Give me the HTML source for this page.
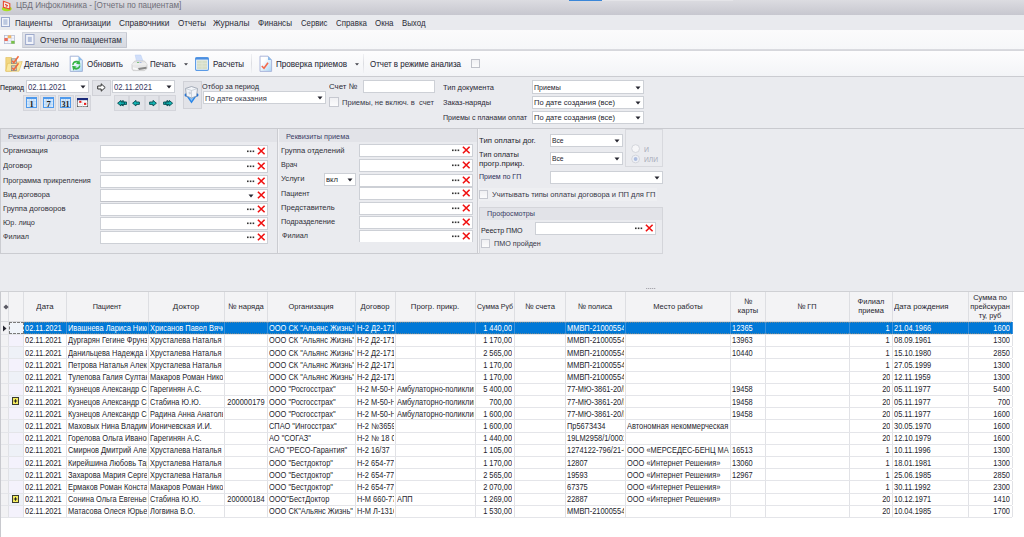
<!DOCTYPE html>
<html><head><meta charset="utf-8">
<style>
html,body{margin:0;padding:0;}
body{width:1024px;height:537px;overflow:hidden;position:relative;background:#eaebef;font-family:"Liberation Sans",sans-serif;}
div{position:absolute;}
.t{white-space:pre;line-height:12px;transform-origin:0 0;}
.cell{overflow:hidden;}
.ct{position:absolute;white-space:pre;line-height:12px;font-size:8.5px;transform:scaleX(0.875);transform-origin:0 0;}
svg{position:absolute;}
</style></head><body>
<div style="left:0px;top:0px;width:1024px;height:15px;background:linear-gradient(#dcdce1,#c7c7cf);"></div>
<div style="left:569px;top:0px;width:33px;height:1px;background:#3a86d8;"></div>
<div style="left:602px;top:0px;width:131px;height:1px;background:#e4e4e8;"></div>
<svg style="position:absolute;left:0px;top:0px" width="14" height="14" viewBox="0 0 14 14"><ellipse cx="6.8" cy="8.8" rx="4.9" ry="2.4" fill="#a8e020"/><path d="M3.4 1.2 L9.8 3.6 L9.8 9 L3.4 7.4 Z" fill="#f6ece4" stroke="#e84a30" stroke-width="1.1"/><path d="M5 4.2 L7.8 5.6 L6.2 7.2 M5.6 5.8 H7.4" fill="none" stroke="#e8402a" stroke-width="1"/></svg>
<div class="t" style="left:15.5px;top:0.16px;font-size:8.2px;color:#6e6e78;transform:scaleX(0.9948);">ЦБД Инфоклиника - [Отчеты по пациентам]</div>
<div style="left:0px;top:15px;width:1024px;height:15px;background:#e9eaee;"></div>
<svg style="position:absolute;left:1px;top:17px" width="9" height="10" viewBox="0 0 9 10"><rect x="0.5" y="0.5" width="8" height="9" fill="#f2f4fa" stroke="#9aa8cc" stroke-width="1"/><rect x="2.3" y="2.2" width="4.2" height="5.6" fill="#bcc8e0"/></svg>
<div class="t" style="left:15.2px;top:17.01px;font-size:9.2px;color:#2a2a36;transform:scaleX(0.8688);">Пациенты</div>
<div class="t" style="left:61.5px;top:17.01px;font-size:9.2px;color:#2a2a36;transform:scaleX(0.8788);">Организации</div>
<div class="t" style="left:118.7px;top:17.01px;font-size:9.2px;color:#2a2a36;transform:scaleX(0.9043);">Справочники</div>
<div class="t" style="left:177.5px;top:17.01px;font-size:9.2px;color:#2a2a36;transform:scaleX(0.8805);">Отчеты</div>
<div class="t" style="left:213px;top:17.01px;font-size:9.2px;color:#2a2a36;transform:scaleX(0.9083);">Журналы</div>
<div class="t" style="left:258px;top:17.01px;font-size:9.2px;color:#2a2a36;transform:scaleX(0.8803);">Финансы</div>
<div class="t" style="left:300.5px;top:17.01px;font-size:9.2px;color:#2a2a36;transform:scaleX(0.8412);">Сервис</div>
<div class="t" style="left:335.5px;top:17.01px;font-size:9.2px;color:#2a2a36;transform:scaleX(0.8589);">Справка</div>
<div class="t" style="left:375px;top:17.01px;font-size:9.2px;color:#2a2a36;transform:scaleX(0.8654);">Окна</div>
<div class="t" style="left:402px;top:17.01px;font-size:9.2px;color:#2a2a36;transform:scaleX(0.8537);">Выход</div>
<div style="left:0px;top:30px;width:1024px;height:19px;background:linear-gradient(#fbfbfc,#f6f7f9);"></div>
<div style="left:0px;top:49px;width:1024px;height:2px;background:linear-gradient(#dcdde2,#d4d5da);"></div>
<svg style="position:absolute;left:4px;top:35px" width="11" height="9" viewBox="0 0 11 9"><rect x="0.4" y="0.4" width="10.2" height="8.2" fill="#f8f8fc" stroke="#b4bcd4" stroke-width="0.8"/><path d="M3.8 0.4 V8.6 M7.2 0.4 V8.6 M0.4 3.2 H10.6 M0.4 5.9 H10.6" stroke="#c8d0e4" stroke-width="0.6"/><rect x="0.4" y="3" width="3.4" height="3" fill="#ea6a58"/><rect x="3.8" y="0.4" width="3.4" height="2.8" fill="#f2b460"/><rect x="7.2" y="5.9" width="3.4" height="2.8" fill="#78c048"/></svg>
<div style="left:22px;top:32px;width:105px;height:16px;background:linear-gradient(#e4e6ec,#d6d9e0);border:1px solid #d0d3db;border-right-color:#c4c7d0;border-bottom-color:#c4c7d0;box-sizing:border-box;border-radius:1px;"></div>
<svg style="position:absolute;left:25px;top:34px" width="10" height="11" viewBox="0 0 10 11"><rect x="0.6" y="0.5" width="8.4" height="10" fill="#f2f4fa" stroke="#9eaacc" stroke-width="1"/><rect x="2.8" y="2.8" width="4" height="5.2" fill="#b4c0dc"/></svg>
<div class="t" style="left:40px;top:33.81px;font-size:9.2px;color:#2a2a36;transform:scaleX(0.8781);">Отчеты по пациентам</div>
<div style="left:0px;top:51px;width:1024px;height:25px;background:linear-gradient(#fdfdfe,#f3f4f7);"></div>
<div style="left:0px;top:76px;width:1024px;height:1px;background:#cbccd1;"></div>
<svg style="position:absolute;left:5px;top:55px" width="18" height="17" viewBox="0 0 18 17"><path d="M0.8 2.5 L6.5 2.5 L6.5 16.2 L0.8 16.2 Z" fill="#f2d680" stroke="#e0bc58" stroke-width="0.6"/><path d="M2.5 8.5 L17.2 6.5 L14 16.2 L0.8 16.2 Z" fill="#fae8a0" stroke="#e0bc58" stroke-width="0.6"/><rect x="6.5" y="3.8" width="4.8" height="4.8" fill="#d0d0c8" stroke="#8c8c84" stroke-width="0.8"/><rect x="6.5" y="10.8" width="4.8" height="4.8" fill="#d0d0c8" stroke="#8c8c84" stroke-width="0.8"/><path d="M7.2 5.8 L8.8 7.8 L13.5 1.2" fill="none" stroke="#f26a3c" stroke-width="1.5"/><path d="M7.2 12.8 L8.8 14.8 L13.5 8.2" fill="none" stroke="#f26a3c" stroke-width="1.5"/></svg>
<div class="t" style="left:24px;top:57.71px;font-size:9.5px;color:#2c2c3a;transform:scaleX(0.8343);-webkit-text-stroke:0.08px #2c2c3a;">Детально</div>
<svg style="position:absolute;left:69px;top:55px" width="15" height="18" viewBox="0 0 15 18"><defs><linearGradient id="gd1" x1="0" y1="0" x2="1" y2="1"><stop offset="0.3" stop-color="#ffffff"/><stop offset="1" stop-color="#a8d4f4"/></linearGradient></defs><path d="M1.2 1.2 L9.5 1.2 L13.4 5.2 L13.4 16.4 L1.2 16.4 Z" fill="url(#gd1)" stroke="#a4b4d8" stroke-width="1"/><path d="M9.5 1.2 L9.5 5.2 L13.4 5.2 Z" fill="#8cbcec"/><path d="M3.2 10 C3 6.5 6.5 5 9.5 6.2 L10.2 4.6 L11.4 9.6 L6.8 8.8 L8.3 7.7 C6.6 7.2 4.8 8 4.6 10 Z" fill="#34b444"/><path d="M11.4 10.6 C11.6 14 8 15.4 5 14.3 L4.3 15.8 L3.1 10.8 L7.7 11.6 L6.2 12.7 C7.9 13.2 9.8 12.4 10 10.6 Z" fill="#34b444"/></svg>
<div class="t" style="left:86.5px;top:57.71px;font-size:9.5px;color:#2c2c3a;transform:scaleX(0.8369);-webkit-text-stroke:0.08px #2c2c3a;">Обновить</div>
<svg style="position:absolute;left:131px;top:54px" width="17" height="18" viewBox="0 0 17 18"><path d="M4.2 1 L9.8 1 L12.2 7.5 L5.6 7.5 Z" fill="#d0defa" stroke="#b8ccf0" stroke-width="0.5"/><path d="M1 10 L3.8 7 L13.4 7 L16 10 L16 14.5 L13.4 16.6 L2 16.6 L1 15 Z" fill="#e8e8e8" stroke="#c4c4c4" stroke-width="0.7"/><path d="M1 10 L16 10" stroke="#f8f8f8" stroke-width="0.8"/><rect x="6" y="8" width="2" height="1" fill="#7cc47c"/><rect x="8.5" y="8" width="2" height="1" fill="#a8b8e0"/><path d="M7 14 L15.5 12.8 L15.5 14.8 L8 16 Z" fill="#888"/><path d="M2 13.2 L6.5 14.5 L6.5 16 L2 15 Z" fill="#fafafa"/></svg>
<div class="t" style="left:150px;top:57.71px;font-size:9.5px;color:#2c2c3a;transform:scaleX(0.8354);-webkit-text-stroke:0.08px #2c2c3a;">Печать</div>
<svg style="position:absolute;left:183.5px;top:63px" width="4" height="3" viewBox="0 0 4 3"><path d="M0 0.2 L4 0.2 L2 2.6 Z" fill="#404048"/></svg>
<svg style="position:absolute;left:195px;top:57px" width="14" height="14" viewBox="0 0 14 14"><rect x="0.6" y="0.6" width="12.8" height="12.8" rx="1.2" fill="#f4f8fc" stroke="#5a9ae6" stroke-width="1.1"/><rect x="0.6" y="0.6" width="12.8" height="2" fill="#4a8ee0"/><rect x="2" y="3.4" width="10" height="8.8" fill="#d6dec8"/><path d="M2 6.4 H12 M2 9.2 H12 M7 3.4 V12.2" stroke="#e4eadc" stroke-width="0.6"/></svg>
<div class="t" style="left:212.5px;top:57.71px;font-size:9.5px;color:#2c2c3a;transform:scaleX(0.8368);-webkit-text-stroke:0.08px #2c2c3a;">Расчеты</div>
<div style="left:251px;top:54px;width:1px;height:19px;background:linear-gradient(#f0f1f4,#dcdde2 50%,#f0f1f4);"></div>
<svg style="position:absolute;left:259px;top:55px" width="14" height="18" viewBox="0 0 14 18"><defs><linearGradient id="gd2" x1="0" y1="0" x2="1" y2="1"><stop offset="0.3" stop-color="#ffffff"/><stop offset="1" stop-color="#a8d4f4"/></linearGradient></defs><path d="M1 1.2 L9 1.2 L12.6 5 L12.6 16.4 L1 16.4 Z" fill="url(#gd2)" stroke="#acb6da" stroke-width="1"/><path d="M9 1.2 L9 5 L12.6 5 Z" fill="#88b8e8"/><path d="M2.8 11 L5 13.2 L9 7.8" fill="none" stroke="#f46a4c" stroke-width="1.6"/></svg>
<div class="t" style="left:276px;top:57.71px;font-size:9.5px;color:#2c2c3a;transform:scaleX(0.8547);-webkit-text-stroke:0.08px #2c2c3a;">Проверка приемов</div>
<svg style="position:absolute;left:354.5px;top:63px" width="4" height="3" viewBox="0 0 4 3"><path d="M0 0.2 L4 0.2 L2 2.6 Z" fill="#404048"/></svg>
<div style="left:363px;top:54px;width:1px;height:19px;background:linear-gradient(#f0f1f4,#dcdde2 50%,#f0f1f4);"></div>
<div class="t" style="left:370px;top:57.71px;font-size:9.5px;color:#2c2c3a;transform:scaleX(0.8332);-webkit-text-stroke:0.08px #2c2c3a;">Отчет в режиме анализа</div>
<div style="left:471px;top:59px;width:9px;height:9px;background:linear-gradient(#f0f0f3,#fbfbfc);border:1px solid #c0c2ca;box-sizing:border-box;"></div>
<div style="left:0px;top:77px;width:1024px;height:460px;background:#eaebef;"></div>
<div class="t" style="left:0px;top:81.73px;font-size:8px;color:#202028;transform:scaleX(0.8553);-webkit-text-stroke:0.1px #202028;">Период</div>
<div style="left:26px;top:80px;width:63px;height:13px;background:#fff;border:1px solid #cdd0d6;box-sizing:border-box;"></div>
<div class="t" style="left:27.5px;top:81.02px;font-size:8.6px;color:#34345e;transform:scaleX(0.8961);">02.11.2021</div>
<svg style="position:absolute;left:80px;top:85.0px" width="6" height="4" viewBox="0 0 6 4"><path d="M0.5 0.5 L5.5 0.5 L3 3.5 Z" fill="#25252f"/></svg>
<div style="left:92px;top:80px;width:19px;height:16px;background:#e2e3e8;border:1px solid #d0d1d7;box-sizing:border-box;"></div>
<svg style="position:absolute;left:97px;top:82.5px" width="9" height="9" viewBox="0 0 9 9"><path d="M0.7 3 L4.2 3 L4.2 0.8 L8.2 4.5 L4.2 8.2 L4.2 6 L0.7 6 Z" fill="#fcfcfc" stroke="#303030" stroke-width="1" stroke-linejoin="miter"/></svg>
<div style="left:112px;top:80px;width:63px;height:13px;background:#fff;border:1px solid #cdd0d6;box-sizing:border-box;"></div>
<div class="t" style="left:113.5px;top:81.02px;font-size:8.6px;color:#34345e;transform:scaleX(0.8961);">02.11.2021</div>
<svg style="position:absolute;left:166px;top:85.0px" width="6" height="4" viewBox="0 0 6 4"><path d="M0.5 0.5 L5.5 0.5 L3 3.5 Z" fill="#25252f"/></svg>
<div style="left:23px;top:95px;width:16px;height:16px;background:#e2e3e8;border:1px solid #d4d5db;box-sizing:border-box;"></div>
<div style="left:40px;top:95px;width:16px;height:16px;background:#e2e3e8;border:1px solid #d4d5db;box-sizing:border-box;"></div>
<div style="left:58px;top:95px;width:16px;height:16px;background:#e2e3e8;border:1px solid #d4d5db;box-sizing:border-box;"></div>
<div style="left:75px;top:95px;width:16px;height:16px;background:#e2e3e8;border:1px solid #d4d5db;box-sizing:border-box;"></div>
<svg style="position:absolute;left:26px;top:97px" width="11" height="11" viewBox="0 0 11 11"><rect x="0" y="0" width="11" height="11" fill="#4f9aec"/><rect x="1" y="2" width="9" height="8" fill="#d8eafc"/><path d="M1 4.6 H10 M1 7.2 H10 M3.2 2 V10 M5.5 2 V10 M7.8 2 V10" stroke="#a8ccf4" stroke-width="0.6"/><text x="5.5" y="9.6" font-family="Liberation Serif" font-weight="bold" font-size="8.5" text-anchor="middle" fill="#1a1a1a" >1</text></svg>
<svg style="position:absolute;left:43px;top:97px" width="11" height="11" viewBox="0 0 11 11"><rect x="0" y="0" width="11" height="11" fill="#4f9aec"/><rect x="1" y="2" width="9" height="8" fill="#d8eafc"/><path d="M1 4.6 H10 M1 7.2 H10 M3.2 2 V10 M5.5 2 V10 M7.8 2 V10" stroke="#a8ccf4" stroke-width="0.6"/><text x="5.5" y="9.6" font-family="Liberation Serif" font-weight="bold" font-size="8.5" text-anchor="middle" fill="#1a1a1a" >7</text></svg>
<svg style="position:absolute;left:60px;top:97px" width="11" height="11" viewBox="0 0 11 11"><rect x="0" y="0" width="11" height="11" fill="#4f9aec"/><rect x="1" y="2" width="9" height="8" fill="#d8eafc"/><path d="M1 4.6 H10 M1 7.2 H10 M3.2 2 V10 M5.5 2 V10 M7.8 2 V10" stroke="#a8ccf4" stroke-width="0.6"/><text x="5.5" y="9.6" font-family="Liberation Serif" font-weight="bold" font-size="8" text-anchor="middle" fill="#1a1a1a" textLength="8" lengthAdjust="spacingAndGlyphs">31</text></svg>
<svg style="position:absolute;left:77px;top:98px" width="11" height="9" viewBox="0 0 11 9"><rect x="0.3" y="0.3" width="10.4" height="8.4" fill="#fff" stroke="#404040" stroke-width="0.6"/><rect x="0" y="0" width="11" height="2.2" fill="#1a2a7a"/><path d="M0.5 4.6 H10.5 M0.5 6.6 H10.5 M3 2 V9 M5.5 2 V9 M8 2 V9" stroke="#e0e0e0" stroke-width="0.5"/><rect x="2.2" y="2.8" width="2.2" height="2" fill="#e81c1c"/><rect x="7" y="4.9" width="2.2" height="2" fill="#e81c1c"/></svg>
<div style="left:114px;top:95px;width:15px;height:16px;background:#e2e3e8;border:1px solid #d4d5db;box-sizing:border-box;"></div>
<div style="left:129px;top:95px;width:16px;height:16px;background:#e2e3e8;border:1px solid #d4d5db;box-sizing:border-box;"></div>
<div style="left:145px;top:95px;width:14px;height:16px;background:#e2e3e8;border:1px solid #d4d5db;box-sizing:border-box;"></div>
<div style="left:159px;top:95px;width:17px;height:16px;background:#e2e3e8;border:1px solid #d4d5db;box-sizing:border-box;"></div>
<svg style="position:absolute;left:117px;top:99.5px" width="10" height="7" viewBox="0 0 10 7"><g transform="translate(2.2,0)"><path d="M0.6 3.2 L4 0.4 L4 2 L7.4 2 L7.4 4.4 L4 4.4 L4 6 Z" fill="#10b4b4" stroke="#084c50" stroke-width="0.9" stroke-linejoin="round"/></g><path d="M0.6 3.2 L4 0.4 L4 2 L7.4 2 L7.4 4.4 L4 4.4 L4 6 Z" fill="#10b4b4" stroke="#084c50" stroke-width="0.9" stroke-linejoin="round"/></svg>
<svg style="position:absolute;left:132px;top:99.5px" width="8" height="7" viewBox="0 0 8 7"><path d="M0.6 3.2 L4 0.4 L4 2 L7.4 2 L7.4 4.4 L4 4.4 L4 6 Z" fill="#10b4b4" stroke="#084c50" stroke-width="0.9" stroke-linejoin="round"/></svg>
<svg style="position:absolute;left:149px;top:99.5px" width="8" height="7" viewBox="0 0 8 7"><path d="M7.4 3.2 L4 0.4 L4 2 L0.6 2 L0.6 4.4 L4 4.4 L4 6 Z" fill="#10b4b4" stroke="#084c50" stroke-width="0.9" stroke-linejoin="round"/></svg>
<svg style="position:absolute;left:162.5px;top:99.5px" width="10" height="7" viewBox="0 0 10 7"><path d="M7.4 3.2 L4 0.4 L4 2 L0.6 2 L0.6 4.4 L4 4.4 L4 6 Z" fill="#10b4b4" stroke="#084c50" stroke-width="0.9" stroke-linejoin="round"/><g transform="translate(2.2,0)"><path d="M7.4 3.2 L4 0.4 L4 2 L0.6 2 L0.6 4.4 L4 4.4 L4 6 Z" fill="#10b4b4" stroke="#084c50" stroke-width="0.9" stroke-linejoin="round"/></g></svg>
<div style="left:183px;top:81px;width:19px;height:28px;background:#e2e3e8;border:1px solid #d0d1d7;box-sizing:border-box;"></div>
<svg style="position:absolute;left:183px;top:85px" width="17" height="20" viewBox="0 0 17 20"><path d="M2 9 L15 9 L8.5 18.5 Z" fill="#2a86e8"/><path d="M4.5 10 L12.5 10 L8.5 16 Z" fill="#8cc4f8"/><circle cx="3.3" cy="10" r="1.8" fill="#1c70d8"/><circle cx="13.7" cy="10" r="1.8" fill="#1c70d8"/><path d="M2.5 3.5 L8.5 1.5 L14.5 3.5 L13.5 11 L8.5 13 L3.5 11 Z" fill="#f2f4f8" stroke="#8a94a4" stroke-width="0.7"/><path d="M2.5 3.5 L8.5 5.5 L14.5 3.5 M8.5 5.5 L8.5 13" stroke="#b4bcc8" stroke-width="0.6" fill="none"/><path d="M5.5 7 L7.5 6.5 L8 9 L6 9.5 Z" fill="#c8ced8"/></svg>
<div class="t" style="left:202px;top:80.53px;font-size:8px;color:#2a2a36;transform:scaleX(0.9110);">Отбор за период</div>
<div style="left:203px;top:91px;width:123px;height:13px;background:#fff;border:1px solid #cdd0d6;box-sizing:border-box;"></div>
<div class="t" style="left:204.5px;top:92.53px;font-size:8px;color:#383848;transform:scaleX(0.9445);">По дате оказания</div>
<svg style="position:absolute;left:317px;top:96.0px" width="6" height="4" viewBox="0 0 6 4"><path d="M0.5 0.5 L5.5 0.5 L3 3.5 Z" fill="#25252f"/></svg>
<div class="t" style="left:329px;top:80.53px;font-size:8px;color:#2a2a36;transform:scaleX(0.9822);">Счет №</div>
<div style="left:363px;top:80px;width:72px;height:13px;background:#fff;border:1px solid #cdd0d6;box-sizing:border-box;"></div>
<div style="left:329px;top:97px;width:10px;height:10px;background:linear-gradient(#f0f0f3,#fbfbfc);border:1px solid #c6c8d0;box-sizing:border-box;"></div>
<div class="t" style="left:342px;top:96.73px;font-size:8px;color:#383848;transform:scaleX(0.9439);">Приемы, не включ. в  счет</div>
<div class="t" style="left:443px;top:82.03px;font-size:8px;color:#2a2a36;transform:scaleX(0.9346);">Тип документа</div>
<div class="t" style="left:443px;top:97.03px;font-size:8px;color:#2a2a36;transform:scaleX(0.9298);">Заказ-наряды</div>
<div class="t" style="left:443px;top:112.03px;font-size:8px;color:#2a2a36;transform:scaleX(0.8869);">Приемы с планами оплат</div>
<div style="left:532px;top:80px;width:112px;height:14px;background:#fff;border:1px solid #cdd0d6;box-sizing:border-box;"></div>
<div class="t" style="left:533.5px;top:81.73px;font-size:8px;color:#25252d;transform:scaleX(0.8792);">Приемы</div>
<svg style="position:absolute;left:635px;top:85.5px" width="6" height="4" viewBox="0 0 6 4"><path d="M0.5 0.5 L5.5 0.5 L3 3.5 Z" fill="#25252f"/></svg>
<div style="left:532px;top:96px;width:112px;height:13px;background:#fff;border:1px solid #cdd0d6;box-sizing:border-box;"></div>
<div class="t" style="left:533.5px;top:96.73px;font-size:8px;color:#25252d;transform:scaleX(0.9413);">По дате создания (все)</div>
<svg style="position:absolute;left:635px;top:101.0px" width="6" height="4" viewBox="0 0 6 4"><path d="M0.5 0.5 L5.5 0.5 L3 3.5 Z" fill="#25252f"/></svg>
<div style="left:532px;top:111px;width:112px;height:13px;background:#fff;border:1px solid #cdd0d6;box-sizing:border-box;"></div>
<div class="t" style="left:533.5px;top:111.73px;font-size:8px;color:#25252d;transform:scaleX(0.9413);">По дате создания (все)</div>
<svg style="position:absolute;left:635px;top:116.0px" width="6" height="4" viewBox="0 0 6 4"><path d="M0.5 0.5 L5.5 0.5 L3 3.5 Z" fill="#25252f"/></svg>
<div style="left:0px;top:128px;width:1024px;height:1px;background:#c9cacf;"></div>
<div style="left:0px;top:129px;width:1px;height:125px;background:#cbccd1;"></div>
<div style="left:1px;top:129px;width:276px;height:13px;background:#e2e3e8;"></div>
<div style="left:277px;top:129px;width:1px;height:125px;background:#cbccd1;"></div>
<div style="left:278px;top:129px;width:1px;height:125px;background:#f2f2f5;"></div>
<div style="left:279px;top:129px;width:198px;height:13px;background:#e2e3e8;"></div>
<div style="left:477px;top:129px;width:1px;height:125px;background:#cbccd1;"></div>
<div style="left:478px;top:129px;width:1px;height:125px;background:#f2f2f5;"></div>
<div style="left:0px;top:253px;width:479px;height:1px;background:#cbccd1;"></div>
<div class="t" style="left:8px;top:131.23px;font-size:8px;color:#3a3e66;transform:scaleX(0.9436);">Реквизиты договора</div>
<div class="t" style="left:286px;top:131.23px;font-size:8px;color:#3a3e66;transform:scaleX(0.9164);">Реквизиты приема</div>
<div class="t" style="left:3px;top:144.93px;font-size:8px;color:#303038;transform:scaleX(0.9264);">Организация</div>
<div style="left:100px;top:145px;width:168px;height:13px;background:#fff;border:1px solid #cdd0d6;box-sizing:border-box;"></div>
<svg style="position:absolute;left:247px;top:150px" width="8" height="3" viewBox="0 0 8 3"><rect x="0" y="0.5" width="1.6" height="1.6" fill="#333"/><rect x="2.8" y="0.5" width="1.6" height="1.6" fill="#333"/><rect x="5.6" y="0.5" width="1.6" height="1.6" fill="#333"/></svg>
<svg style="position:absolute;left:257px;top:147px" width="9" height="8" viewBox="0 0 9 8"><path d="M0.9 0.7 L7.6 7.3 M7.6 0.7 L0.9 7.3" stroke="#f01010" stroke-width="1.6"/></svg>
<div class="t" style="left:3px;top:159.93px;font-size:8px;color:#303038;transform:scaleX(0.9567);">Договор</div>
<div style="left:100px;top:160px;width:168px;height:13px;background:#fff;border:1px solid #cdd0d6;box-sizing:border-box;"></div>
<svg style="position:absolute;left:247px;top:165px" width="8" height="3" viewBox="0 0 8 3"><rect x="0" y="0.5" width="1.6" height="1.6" fill="#333"/><rect x="2.8" y="0.5" width="1.6" height="1.6" fill="#333"/><rect x="5.6" y="0.5" width="1.6" height="1.6" fill="#333"/></svg>
<svg style="position:absolute;left:257px;top:162px" width="9" height="8" viewBox="0 0 9 8"><path d="M0.9 0.7 L7.6 7.3 M7.6 0.7 L0.9 7.3" stroke="#f01010" stroke-width="1.6"/></svg>
<div class="t" style="left:3px;top:174.93px;font-size:8px;color:#303038;transform:scaleX(0.9103);">Программа прикрепления</div>
<div style="left:100px;top:175px;width:168px;height:13px;background:#fff;border:1px solid #cdd0d6;box-sizing:border-box;"></div>
<svg style="position:absolute;left:247px;top:180px" width="8" height="3" viewBox="0 0 8 3"><rect x="0" y="0.5" width="1.6" height="1.6" fill="#333"/><rect x="2.8" y="0.5" width="1.6" height="1.6" fill="#333"/><rect x="5.6" y="0.5" width="1.6" height="1.6" fill="#333"/></svg>
<svg style="position:absolute;left:257px;top:177px" width="9" height="8" viewBox="0 0 9 8"><path d="M0.9 0.7 L7.6 7.3 M7.6 0.7 L0.9 7.3" stroke="#f01010" stroke-width="1.6"/></svg>
<div class="t" style="left:3px;top:188.93px;font-size:8px;color:#303038;transform:scaleX(0.9305);">Вид договора</div>
<div style="left:100px;top:189px;width:168px;height:13px;background:#fff;border:1px solid #cdd0d6;border-bottom-color:#c0c2c8;box-sizing:border-box;"></div>
<svg style="position:absolute;left:248px;top:194px" width="6" height="4" viewBox="0 0 6 4"><path d="M0.5 0.5 L5.5 0.5 L3 3.5 Z" fill="#25252f"/></svg>
<svg style="position:absolute;left:257px;top:191px" width="9" height="8" viewBox="0 0 9 8"><path d="M0.9 0.7 L7.6 7.3 M7.6 0.7 L0.9 7.3" stroke="#f01010" stroke-width="1.6"/></svg>
<div class="t" style="left:3px;top:202.93px;font-size:8px;color:#303038;transform:scaleX(0.9536);">Группа договоров</div>
<div style="left:100px;top:203px;width:168px;height:13px;background:#fff;border:1px solid #cdd0d6;box-sizing:border-box;"></div>
<svg style="position:absolute;left:247px;top:208px" width="8" height="3" viewBox="0 0 8 3"><rect x="0" y="0.5" width="1.6" height="1.6" fill="#333"/><rect x="2.8" y="0.5" width="1.6" height="1.6" fill="#333"/><rect x="5.6" y="0.5" width="1.6" height="1.6" fill="#333"/></svg>
<svg style="position:absolute;left:257px;top:205px" width="9" height="8" viewBox="0 0 9 8"><path d="M0.9 0.7 L7.6 7.3 M7.6 0.7 L0.9 7.3" stroke="#f01010" stroke-width="1.6"/></svg>
<div class="t" style="left:3px;top:216.93px;font-size:8px;color:#303038;transform:scaleX(0.9100);">Юр. лицо</div>
<div style="left:100px;top:217px;width:168px;height:13px;background:#fff;border:1px solid #cdd0d6;box-sizing:border-box;"></div>
<svg style="position:absolute;left:247px;top:222px" width="8" height="3" viewBox="0 0 8 3"><rect x="0" y="0.5" width="1.6" height="1.6" fill="#333"/><rect x="2.8" y="0.5" width="1.6" height="1.6" fill="#333"/><rect x="5.6" y="0.5" width="1.6" height="1.6" fill="#333"/></svg>
<svg style="position:absolute;left:257px;top:219px" width="9" height="8" viewBox="0 0 9 8"><path d="M0.9 0.7 L7.6 7.3 M7.6 0.7 L0.9 7.3" stroke="#f01010" stroke-width="1.6"/></svg>
<div class="t" style="left:3px;top:230.93px;font-size:8px;color:#303038;transform:scaleX(0.9026);">Филиал</div>
<div style="left:100px;top:231px;width:168px;height:13px;background:#fff;border:1px solid #cdd0d6;box-sizing:border-box;"></div>
<svg style="position:absolute;left:247px;top:236px" width="8" height="3" viewBox="0 0 8 3"><rect x="0" y="0.5" width="1.6" height="1.6" fill="#333"/><rect x="2.8" y="0.5" width="1.6" height="1.6" fill="#333"/><rect x="5.6" y="0.5" width="1.6" height="1.6" fill="#333"/></svg>
<svg style="position:absolute;left:257px;top:233px" width="9" height="8" viewBox="0 0 9 8"><path d="M0.9 0.7 L7.6 7.3 M7.6 0.7 L0.9 7.3" stroke="#f01010" stroke-width="1.6"/></svg>
<div class="t" style="left:281px;top:144.83px;font-size:8px;color:#303038;transform:scaleX(0.9538);">Группа отделений</div>
<div style="left:359px;top:144px;width:114px;height:13px;background:#fff;border:1px solid #cdd0d6;box-sizing:border-box;"></div>
<svg style="position:absolute;left:452px;top:149px" width="8" height="3" viewBox="0 0 8 3"><rect x="0" y="0.5" width="1.6" height="1.6" fill="#333"/><rect x="2.8" y="0.5" width="1.6" height="1.6" fill="#333"/><rect x="5.6" y="0.5" width="1.6" height="1.6" fill="#333"/></svg>
<svg style="position:absolute;left:462px;top:146px" width="9" height="8" viewBox="0 0 9 8"><path d="M0.9 0.7 L7.6 7.3 M7.6 0.7 L0.9 7.3" stroke="#f01010" stroke-width="1.6"/></svg>
<div class="t" style="left:281px;top:159.13px;font-size:8px;color:#303038;transform:scaleX(0.8943);">Врач</div>
<div style="left:359px;top:159px;width:114px;height:13px;background:#fff;border:1px solid #cdd0d6;box-sizing:border-box;"></div>
<svg style="position:absolute;left:452px;top:164px" width="8" height="3" viewBox="0 0 8 3"><rect x="0" y="0.5" width="1.6" height="1.6" fill="#333"/><rect x="2.8" y="0.5" width="1.6" height="1.6" fill="#333"/><rect x="5.6" y="0.5" width="1.6" height="1.6" fill="#333"/></svg>
<svg style="position:absolute;left:462px;top:161px" width="9" height="8" viewBox="0 0 9 8"><path d="M0.9 0.7 L7.6 7.3 M7.6 0.7 L0.9 7.3" stroke="#f01010" stroke-width="1.6"/></svg>
<div class="t" style="left:281px;top:173.43px;font-size:8px;color:#303038;transform:scaleX(0.9511);">Услуги</div>
<div style="left:359px;top:174px;width:114px;height:13px;background:#fff;border:1px solid #cdd0d6;box-sizing:border-box;"></div>
<svg style="position:absolute;left:452px;top:179px" width="8" height="3" viewBox="0 0 8 3"><rect x="0" y="0.5" width="1.6" height="1.6" fill="#333"/><rect x="2.8" y="0.5" width="1.6" height="1.6" fill="#333"/><rect x="5.6" y="0.5" width="1.6" height="1.6" fill="#333"/></svg>
<svg style="position:absolute;left:462px;top:176px" width="9" height="8" viewBox="0 0 9 8"><path d="M0.9 0.7 L7.6 7.3 M7.6 0.7 L0.9 7.3" stroke="#f01010" stroke-width="1.6"/></svg>
<div class="t" style="left:281px;top:187.63px;font-size:8px;color:#303038;transform:scaleX(0.8967);">Пациент</div>
<div style="left:359px;top:187px;width:114px;height:13px;background:#fff;border:1px solid #cdd0d6;box-sizing:border-box;"></div>
<svg style="position:absolute;left:452px;top:192px" width="8" height="3" viewBox="0 0 8 3"><rect x="0" y="0.5" width="1.6" height="1.6" fill="#333"/><rect x="2.8" y="0.5" width="1.6" height="1.6" fill="#333"/><rect x="5.6" y="0.5" width="1.6" height="1.6" fill="#333"/></svg>
<svg style="position:absolute;left:462px;top:189px" width="9" height="8" viewBox="0 0 9 8"><path d="M0.9 0.7 L7.6 7.3 M7.6 0.7 L0.9 7.3" stroke="#f01010" stroke-width="1.6"/></svg>
<div class="t" style="left:281px;top:201.63px;font-size:8px;color:#303038;transform:scaleX(0.9508);">Представитель</div>
<div style="left:359px;top:202px;width:114px;height:13px;background:#fff;border:1px solid #cdd0d6;box-sizing:border-box;"></div>
<svg style="position:absolute;left:452px;top:207px" width="8" height="3" viewBox="0 0 8 3"><rect x="0" y="0.5" width="1.6" height="1.6" fill="#333"/><rect x="2.8" y="0.5" width="1.6" height="1.6" fill="#333"/><rect x="5.6" y="0.5" width="1.6" height="1.6" fill="#333"/></svg>
<svg style="position:absolute;left:462px;top:204px" width="9" height="8" viewBox="0 0 9 8"><path d="M0.9 0.7 L7.6 7.3 M7.6 0.7 L0.9 7.3" stroke="#f01010" stroke-width="1.6"/></svg>
<div class="t" style="left:281px;top:215.83px;font-size:8px;color:#303038;transform:scaleX(0.9263);">Подразделение</div>
<div style="left:359px;top:216px;width:114px;height:13px;background:#fff;border:1px solid #cdd0d6;box-sizing:border-box;"></div>
<svg style="position:absolute;left:452px;top:221px" width="8" height="3" viewBox="0 0 8 3"><rect x="0" y="0.5" width="1.6" height="1.6" fill="#333"/><rect x="2.8" y="0.5" width="1.6" height="1.6" fill="#333"/><rect x="5.6" y="0.5" width="1.6" height="1.6" fill="#333"/></svg>
<svg style="position:absolute;left:462px;top:218px" width="9" height="8" viewBox="0 0 9 8"><path d="M0.9 0.7 L7.6 7.3 M7.6 0.7 L0.9 7.3" stroke="#f01010" stroke-width="1.6"/></svg>
<div class="t" style="left:282.2px;top:230.43px;font-size:8px;color:#303038;transform:scaleX(0.9026);">Филиал</div>
<div style="left:359px;top:230px;width:114px;height:12px;background:#fff;border:1px solid #cdd0d6;box-sizing:border-box;border-bottom:none;"></div>
<svg style="position:absolute;left:452px;top:235px" width="8" height="3" viewBox="0 0 8 3"><rect x="0" y="0.5" width="1.6" height="1.6" fill="#333"/><rect x="2.8" y="0.5" width="1.6" height="1.6" fill="#333"/><rect x="5.6" y="0.5" width="1.6" height="1.6" fill="#333"/></svg>
<svg style="position:absolute;left:462px;top:232px" width="9" height="8" viewBox="0 0 9 8"><path d="M0.9 0.7 L7.6 7.3 M7.6 0.7 L0.9 7.3" stroke="#f01010" stroke-width="1.6"/></svg>
<div style="left:324px;top:173px;width:32px;height:13px;background:#fff;border:1px solid #cdd0d6;box-sizing:border-box;"></div>
<div class="t" style="left:325.5px;top:173.93px;font-size:8px;color:#25252d;transform:scaleX(0.9594);">вкл</div>
<svg style="position:absolute;left:347px;top:178.0px" width="6" height="4" viewBox="0 0 6 4"><path d="M0.5 0.5 L5.5 0.5 L3 3.5 Z" fill="#25252f"/></svg>
<div class="t" style="left:479px;top:134.73px;font-size:8px;color:#25252d;transform:scaleX(0.9725);">Тип оплаты дог.</div>
<div class="t" style="left:479px;top:149.03px;font-size:8px;color:#25252d;transform:scaleX(0.9310);">Тип оплаты</div>
<div class="t" style="left:479px;top:157.83px;font-size:8px;color:#25252d;transform:scaleX(0.9818);">прогр.прикр.</div>
<div class="t" style="left:479px;top:171.23px;font-size:8px;color:#2c3058;transform:scaleX(0.8816);">Прием по ГП</div>
<div style="left:550px;top:134px;width:73px;height:13px;background:#fff;border:1px solid #cdd0d6;box-sizing:border-box;"></div>
<div class="t" style="left:551.5px;top:135.23px;font-size:8px;color:#25252d;transform:scaleX(0.8415);">Все</div>
<svg style="position:absolute;left:614px;top:139.0px" width="6" height="4" viewBox="0 0 6 4"><path d="M0.5 0.5 L5.5 0.5 L3 3.5 Z" fill="#25252f"/></svg>
<div style="left:550px;top:152px;width:73px;height:13px;background:#fff;border:1px solid #cdd0d6;box-sizing:border-box;"></div>
<div class="t" style="left:551.5px;top:153.23px;font-size:8px;color:#25252d;transform:scaleX(0.8415);">Все</div>
<svg style="position:absolute;left:614px;top:157.0px" width="6" height="4" viewBox="0 0 6 4"><path d="M0.5 0.5 L5.5 0.5 L3 3.5 Z" fill="#25252f"/></svg>
<div style="left:625px;top:129px;width:38px;height:38px;border:1px solid #d8d9de;box-sizing:border-box;"></div>
<svg style="position:absolute;left:631px;top:144px" width="10" height="20" viewBox="0 0 10 20"><circle cx="4.6" cy="4.6" r="3.9" fill="#f6f6f8" stroke="#d4d6dc" stroke-width="1"/><circle cx="4.6" cy="15" r="3.9" fill="#eef0f6" stroke="#d4d6dc" stroke-width="1"/><circle cx="4.6" cy="15" r="1.9" fill="#aebee0"/></svg>
<div class="t" style="left:644px;top:143.53px;font-size:8px;color:#a8aab8;transform:scaleX(0.8696);">И</div>
<div class="t" style="left:644px;top:153.93px;font-size:8px;color:#a8aab8;transform:scaleX(0.8358);">ИЛИ</div>
<div style="left:550px;top:171px;width:113px;height:13px;background:#fff;border:1px solid #cdd0d6;box-sizing:border-box;"></div>
<svg style="position:absolute;left:654px;top:176.0px" width="6" height="4" viewBox="0 0 6 4"><path d="M0.5 0.5 L5.5 0.5 L3 3.5 Z" fill="#25252f"/></svg>
<div style="left:478px;top:188px;width:179px;height:13px;background:#eeeff2;"></div>
<div style="left:479px;top:190px;width:9px;height:9px;background:linear-gradient(#f0f0f3,#fbfbfc);border:1px solid #c6c8d0;box-sizing:border-box;"></div>
<div class="t" style="left:491.5px;top:189.23px;font-size:8px;color:#383848;transform:scaleX(0.9405);">Учитывать типы оплаты договора и ПП для ГП</div>
<div style="left:479px;top:207px;width:184px;height:47px;border:1px solid #d4d5da;box-sizing:border-box;"></div>
<div style="left:480px;top:208px;width:182px;height:12px;background:#e2e3e8;"></div>
<div class="t" style="left:487px;top:208.23px;font-size:8px;color:#3a3e66;transform:scaleX(0.8984);">Профосмотры</div>
<div class="t" style="left:480.5px;top:224.73px;font-size:8px;color:#25252d;transform:scaleX(0.8878);">Реестр ПМО</div>
<div style="left:535px;top:222px;width:121px;height:13px;background:#fff;border:1px solid #cdd0d6;box-sizing:border-box;"></div>
<svg style="position:absolute;left:635px;top:227px" width="8" height="3" viewBox="0 0 8 3"><rect x="0" y="0.5" width="1.6" height="1.6" fill="#333"/><rect x="2.8" y="0.5" width="1.6" height="1.6" fill="#333"/><rect x="5.6" y="0.5" width="1.6" height="1.6" fill="#333"/></svg>
<svg style="position:absolute;left:645px;top:224px" width="9" height="8" viewBox="0 0 9 8"><path d="M0.9 0.7 L7.6 7.3 M7.6 0.7 L0.9 7.3" stroke="#f01010" stroke-width="1.6"/></svg>
<div style="left:481px;top:239px;width:9px;height:9px;background:linear-gradient(#f0f0f3,#fbfbfc);border:1px solid #c6c8d0;box-sizing:border-box;"></div>
<div class="t" style="left:494px;top:238.23px;font-size:8px;color:#383848;transform:scaleX(0.8984);">ПМО пройден</div>
<div style="left:646px;top:288px;width:10px;height:1px;background:repeating-linear-gradient(90deg,#a8a8b0 0 1px,#d8d8dc 1px 2px);"></div>
<div style="left:0px;top:291px;width:1024px;height:246px;background:#fff;"></div>
<div style="left:0px;top:291px;width:1024px;height:1px;background:#cfd0d4;"></div>
<div style="left:1px;top:292px;width:1011px;height:29px;background:#f3f3f5;"></div>
<div style="left:0px;top:321px;width:1012px;height:1px;background:#d8d9dd;"></div>
<div style="left:0px;top:292px;width:1px;height:246px;background:#c8c9ce;"></div>
<div style="left:8px;top:292px;width:1px;height:29px;background:#dddee2;"></div>
<div style="left:23px;top:292px;width:1px;height:29px;background:#dddee2;"></div>
<div style="left:66px;top:292px;width:1px;height:29px;background:#dddee2;"></div>
<div style="left:148px;top:292px;width:1px;height:29px;background:#dddee2;"></div>
<div style="left:224px;top:292px;width:1px;height:29px;background:#dddee2;"></div>
<div style="left:267px;top:292px;width:1px;height:29px;background:#dddee2;"></div>
<div style="left:355px;top:292px;width:1px;height:29px;background:#dddee2;"></div>
<div style="left:395px;top:292px;width:1px;height:29px;background:#dddee2;"></div>
<div style="left:475px;top:292px;width:1px;height:29px;background:#dddee2;"></div>
<div style="left:514px;top:292px;width:1px;height:29px;background:#dddee2;"></div>
<div style="left:565px;top:292px;width:1px;height:29px;background:#dddee2;"></div>
<div style="left:625px;top:292px;width:1px;height:29px;background:#dddee2;"></div>
<div style="left:730px;top:292px;width:1px;height:29px;background:#dddee2;"></div>
<div style="left:765px;top:292px;width:1px;height:29px;background:#dddee2;"></div>
<div style="left:849px;top:292px;width:1px;height:29px;background:#dddee2;"></div>
<div style="left:892px;top:292px;width:1px;height:29px;background:#dddee2;"></div>
<div style="left:968px;top:292px;width:1px;height:29px;background:#dddee2;"></div>
<div style="left:1012px;top:292px;width:1px;height:29px;background:#dddee2;"></div>
<svg style="position:absolute;left:2.5px;top:304px" width="6" height="6" viewBox="0 0 6 6"><path d="M3 0.4 L5.6 3 L3 5.6 L0.4 3 Z" fill="#5a5a64"/></svg>
<div class="t" style="left:-55.5px;width:200px;top:301.03px;font-size:8px;color:#26262e;text-align:center;transform-origin:50% 0;transform:scaleX(0.9737);">Дата</div>
<div class="t" style="left:7.0px;width:200px;top:301.03px;font-size:8px;color:#26262e;text-align:center;transform-origin:50% 0;transform:scaleX(0.9046);">Пациент</div>
<div class="t" style="left:86.0px;width:200px;top:301.03px;font-size:8px;color:#26262e;text-align:center;transform-origin:50% 0;transform:scaleX(1.0088);">Доктор</div>
<div class="t" style="left:145.5px;width:200px;top:301.03px;font-size:8px;color:#26262e;text-align:center;transform-origin:50% 0;transform:scaleX(0.9538);">№ наряда</div>
<div class="t" style="left:211.0px;width:200px;top:301.03px;font-size:8px;color:#26262e;text-align:center;transform-origin:50% 0;transform:scaleX(0.9326);">Организация</div>
<div class="t" style="left:275.0px;width:200px;top:301.03px;font-size:8px;color:#26262e;text-align:center;transform-origin:50% 0;transform:scaleX(0.9517);">Договор</div>
<div class="t" style="left:335.0px;width:200px;top:301.03px;font-size:8px;color:#26262e;text-align:center;transform-origin:50% 0;transform:scaleX(0.9673);">Прогр. прикр.</div>
<div class="t" style="left:394.5px;width:200px;top:301.03px;font-size:8px;color:#26262e;text-align:center;transform-origin:50% 0;transform:scaleX(0.8702);">Сумма Руб</div>
<div class="t" style="left:439.5px;width:200px;top:301.03px;font-size:8px;color:#26262e;text-align:center;transform-origin:50% 0;transform:scaleX(0.9649);">№ счета</div>
<div class="t" style="left:495.0px;width:200px;top:301.03px;font-size:8px;color:#26262e;text-align:center;transform-origin:50% 0;transform:scaleX(0.9258);">№ полиса</div>
<div class="t" style="left:577.5px;width:200px;top:301.03px;font-size:8px;color:#26262e;text-align:center;transform-origin:50% 0;transform:scaleX(0.9407);">Место работы</div>
<div class="t" style="left:707.0px;width:200px;top:301.03px;font-size:8px;color:#26262e;text-align:center;transform-origin:50% 0;transform:scaleX(0.9217);">№ ГП</div>
<div class="t" style="left:647.5px;width:200px;top:296.33px;font-size:8px;color:#26262e;text-align:center;transform-origin:50% 0;transform:scaleX(0.9300);">№</div>
<div class="t" style="left:647.5px;width:200px;top:305.13px;font-size:8px;color:#26262e;text-align:center;transform-origin:50% 0;transform:scaleX(0.9300);">карты</div>
<div class="t" style="left:770.5px;width:200px;top:296.33px;font-size:8px;color:#26262e;text-align:center;transform-origin:50% 0;transform:scaleX(0.9300);">Филиал</div>
<div class="t" style="left:770.5px;width:200px;top:305.13px;font-size:8px;color:#26262e;text-align:center;transform-origin:50% 0;transform:scaleX(0.9300);">приема</div>
<div class="t" style="left:894px;top:301.03px;font-size:8px;color:#26262e;transform:scaleX(0.9657);">Дата рождения</div>
<div class="t" style="left:890.0px;width:200px;top:292.13px;font-size:8px;color:#26262e;text-align:center;transform-origin:50% 0;transform:scaleX(0.9300);">Сумма по</div>
<div class="t" style="left:890.0px;width:200px;top:300.93px;font-size:8px;color:#26262e;text-align:center;transform-origin:50% 0;transform:scaleX(0.9300);">прейскуран</div>
<div class="t" style="left:890.0px;width:200px;top:309.73px;font-size:8px;color:#26262e;text-align:center;transform-origin:50% 0;transform:scaleX(0.9300);">ту, руб</div>
<div style="left:1px;top:322px;width:7px;height:12px;background:#f2f2f4;"></div>
<div style="left:9px;top:322px;width:14px;height:12px;background:#eef1f7;"></div>
<div style="left:24px;top:322px;width:988px;height:12px;background:#0078d7;"></div>
<div style="left:1px;top:334px;width:1011px;height:1px;background:#e4e5e9;"></div>
<div style="left:8px;top:322px;width:1px;height:12px;background:#e1e2e6;"></div>
<div style="left:23px;top:322px;width:1px;height:12px;background:#e1e2e6;"></div>
<div style="left:66px;top:322px;width:1px;height:12px;background:#3a90dc;"></div>
<div style="left:148px;top:322px;width:1px;height:12px;background:#3a90dc;"></div>
<div style="left:224px;top:322px;width:1px;height:12px;background:#3a90dc;"></div>
<div style="left:267px;top:322px;width:1px;height:12px;background:#3a90dc;"></div>
<div style="left:355px;top:322px;width:1px;height:12px;background:#3a90dc;"></div>
<div style="left:395px;top:322px;width:1px;height:12px;background:#3a90dc;"></div>
<div style="left:475px;top:322px;width:1px;height:12px;background:#3a90dc;"></div>
<div style="left:514px;top:322px;width:1px;height:12px;background:#3a90dc;"></div>
<div style="left:565px;top:322px;width:1px;height:12px;background:#3a90dc;"></div>
<div style="left:625px;top:322px;width:1px;height:12px;background:#3a90dc;"></div>
<div style="left:730px;top:322px;width:1px;height:12px;background:#3a90dc;"></div>
<div style="left:765px;top:322px;width:1px;height:12px;background:#3a90dc;"></div>
<div style="left:849px;top:322px;width:1px;height:12px;background:#3a90dc;"></div>
<div style="left:892px;top:322px;width:1px;height:12px;background:#3a90dc;"></div>
<div style="left:968px;top:322px;width:1px;height:12px;background:#3a90dc;"></div>
<div style="left:1012px;top:322px;width:1px;height:12px;background:#3a90dc;"></div>
<div class="cell" style="left:24px;top:322px;width:41px;height:12px;"><span class="ct" style="left:0.5px;top:0.25px;color:#ffffff;">02.11.2021</span></div>
<div class="cell" style="left:67px;top:322px;width:80px;height:12px;"><span class="ct" style="left:0.5px;top:0.25px;color:#ffffff;">Ивашнева Лариса Никол</span></div>
<div class="cell" style="left:149px;top:322px;width:74px;height:12px;"><span class="ct" style="left:0.5px;top:0.25px;color:#ffffff;">Хрисанов Павел Вячес</span></div>
<div class="cell" style="left:268px;top:322px;width:86px;height:12px;"><span class="ct" style="left:0.5px;top:0.25px;color:#ffffff;">ООО СК &quot;Альянс Жизнь&quot;</span></div>
<div class="cell" style="left:356px;top:322px;width:38px;height:12px;"><span class="ct" style="left:0.5px;top:0.25px;color:#ffffff;">Н-2 Д2-1717</span></div>
<div class="cell" style="left:476px;top:322px;width:36px;height:12px;"><span class="ct" style="right:0;transform-origin:100% 0;top:0.25px;color:#ffffff;">1 440,00</span></div>
<div class="cell" style="left:566px;top:322px;width:58px;height:12px;"><span class="ct" style="left:0.5px;top:0.25px;color:#ffffff;">ММВП-2100055400</span></div>
<div class="cell" style="left:731px;top:322px;width:33px;height:12px;"><span class="ct" style="left:0.5px;top:0.25px;color:#ffffff;">12365</span></div>
<div class="cell" style="left:850px;top:322px;width:40px;height:12px;"><span class="ct" style="right:0;transform-origin:100% 0;top:0.25px;color:#ffffff;">1</span></div>
<div class="cell" style="left:893px;top:322px;width:74px;height:12px;"><span class="ct" style="left:0.5px;top:0.25px;color:#ffffff;">21.04.1966</span></div>
<div class="cell" style="left:969px;top:322px;width:41px;height:12px;"><span class="ct" style="right:0;transform-origin:100% 0;top:0.25px;color:#ffffff;">1600</span></div>
<div style="left:1px;top:335px;width:7px;height:11px;background:#f2f2f4;"></div>
<div style="left:9px;top:335px;width:14px;height:11px;background:#f4f2fc;"></div>
<div style="left:1px;top:346px;width:1011px;height:1px;background:#e4e5e9;"></div>
<div style="left:8px;top:335px;width:1px;height:11px;background:#e1e2e6;"></div>
<div style="left:23px;top:335px;width:1px;height:11px;background:#e1e2e6;"></div>
<div style="left:66px;top:335px;width:1px;height:11px;background:#e1e2e6;"></div>
<div style="left:148px;top:335px;width:1px;height:11px;background:#e1e2e6;"></div>
<div style="left:224px;top:335px;width:1px;height:11px;background:#e1e2e6;"></div>
<div style="left:267px;top:335px;width:1px;height:11px;background:#e1e2e6;"></div>
<div style="left:355px;top:335px;width:1px;height:11px;background:#e1e2e6;"></div>
<div style="left:395px;top:335px;width:1px;height:11px;background:#e1e2e6;"></div>
<div style="left:475px;top:335px;width:1px;height:11px;background:#e1e2e6;"></div>
<div style="left:514px;top:335px;width:1px;height:11px;background:#e1e2e6;"></div>
<div style="left:565px;top:335px;width:1px;height:11px;background:#e1e2e6;"></div>
<div style="left:625px;top:335px;width:1px;height:11px;background:#e1e2e6;"></div>
<div style="left:730px;top:335px;width:1px;height:11px;background:#e1e2e6;"></div>
<div style="left:765px;top:335px;width:1px;height:11px;background:#e1e2e6;"></div>
<div style="left:849px;top:335px;width:1px;height:11px;background:#e1e2e6;"></div>
<div style="left:892px;top:335px;width:1px;height:11px;background:#e1e2e6;"></div>
<div style="left:968px;top:335px;width:1px;height:11px;background:#e1e2e6;"></div>
<div style="left:1012px;top:335px;width:1px;height:11px;background:#e1e2e6;"></div>
<div class="cell" style="left:24px;top:335px;width:41px;height:11px;"><span class="ct" style="left:0.5px;top:-0.54px;color:#25252d;">02.11.2021</span></div>
<div class="cell" style="left:67px;top:335px;width:80px;height:11px;"><span class="ct" style="left:0.5px;top:-0.54px;color:#25252d;">Дургарян Гегине Фрунз</span></div>
<div class="cell" style="left:149px;top:335px;width:74px;height:11px;"><span class="ct" style="left:0.5px;top:-0.54px;color:#25252d;">Хрусталева Наталья</span></div>
<div class="cell" style="left:268px;top:335px;width:86px;height:11px;"><span class="ct" style="left:0.5px;top:-0.54px;color:#25252d;">ООО СК &quot;Альянс Жизнь&quot;</span></div>
<div class="cell" style="left:356px;top:335px;width:38px;height:11px;"><span class="ct" style="left:0.5px;top:-0.54px;color:#25252d;">Н-2 Д2-1717</span></div>
<div class="cell" style="left:476px;top:335px;width:36px;height:11px;"><span class="ct" style="right:0;transform-origin:100% 0;top:-0.54px;color:#25252d;">1 170,00</span></div>
<div class="cell" style="left:566px;top:335px;width:58px;height:11px;"><span class="ct" style="left:0.5px;top:-0.54px;color:#25252d;">ММВП-2100055400</span></div>
<div class="cell" style="left:731px;top:335px;width:33px;height:11px;"><span class="ct" style="left:0.5px;top:-0.54px;color:#25252d;">13963</span></div>
<div class="cell" style="left:850px;top:335px;width:40px;height:11px;"><span class="ct" style="right:0;transform-origin:100% 0;top:-0.54px;color:#25252d;">1</span></div>
<div class="cell" style="left:893px;top:335px;width:74px;height:11px;"><span class="ct" style="left:0.5px;top:-0.54px;color:#25252d;">08.09.1961</span></div>
<div class="cell" style="left:969px;top:335px;width:41px;height:11px;"><span class="ct" style="right:0;transform-origin:100% 0;top:-0.54px;color:#25252d;">1300</span></div>
<div style="left:1px;top:347px;width:7px;height:11px;background:#f2f2f4;"></div>
<div style="left:9px;top:347px;width:14px;height:11px;background:#eef1f7;"></div>
<div style="left:1px;top:358px;width:1011px;height:1px;background:#e4e5e9;"></div>
<div style="left:8px;top:347px;width:1px;height:11px;background:#e1e2e6;"></div>
<div style="left:23px;top:347px;width:1px;height:11px;background:#e1e2e6;"></div>
<div style="left:66px;top:347px;width:1px;height:11px;background:#e1e2e6;"></div>
<div style="left:148px;top:347px;width:1px;height:11px;background:#e1e2e6;"></div>
<div style="left:224px;top:347px;width:1px;height:11px;background:#e1e2e6;"></div>
<div style="left:267px;top:347px;width:1px;height:11px;background:#e1e2e6;"></div>
<div style="left:355px;top:347px;width:1px;height:11px;background:#e1e2e6;"></div>
<div style="left:395px;top:347px;width:1px;height:11px;background:#e1e2e6;"></div>
<div style="left:475px;top:347px;width:1px;height:11px;background:#e1e2e6;"></div>
<div style="left:514px;top:347px;width:1px;height:11px;background:#e1e2e6;"></div>
<div style="left:565px;top:347px;width:1px;height:11px;background:#e1e2e6;"></div>
<div style="left:625px;top:347px;width:1px;height:11px;background:#e1e2e6;"></div>
<div style="left:730px;top:347px;width:1px;height:11px;background:#e1e2e6;"></div>
<div style="left:765px;top:347px;width:1px;height:11px;background:#e1e2e6;"></div>
<div style="left:849px;top:347px;width:1px;height:11px;background:#e1e2e6;"></div>
<div style="left:892px;top:347px;width:1px;height:11px;background:#e1e2e6;"></div>
<div style="left:968px;top:347px;width:1px;height:11px;background:#e1e2e6;"></div>
<div style="left:1012px;top:347px;width:1px;height:11px;background:#e1e2e6;"></div>
<div class="cell" style="left:24px;top:347px;width:41px;height:11px;"><span class="ct" style="left:0.5px;top:-0.33px;color:#25252d;">02.11.2021</span></div>
<div class="cell" style="left:67px;top:347px;width:80px;height:11px;"><span class="ct" style="left:0.5px;top:-0.33px;color:#25252d;">Данильцева Надежда Ив</span></div>
<div class="cell" style="left:149px;top:347px;width:74px;height:11px;"><span class="ct" style="left:0.5px;top:-0.33px;color:#25252d;">Хрусталева Наталья</span></div>
<div class="cell" style="left:268px;top:347px;width:86px;height:11px;"><span class="ct" style="left:0.5px;top:-0.33px;color:#25252d;">ООО СК &quot;Альянс Жизнь&quot;</span></div>
<div class="cell" style="left:356px;top:347px;width:38px;height:11px;"><span class="ct" style="left:0.5px;top:-0.33px;color:#25252d;">Н-2 Д2-1717</span></div>
<div class="cell" style="left:476px;top:347px;width:36px;height:11px;"><span class="ct" style="right:0;transform-origin:100% 0;top:-0.33px;color:#25252d;">2 565,00</span></div>
<div class="cell" style="left:566px;top:347px;width:58px;height:11px;"><span class="ct" style="left:0.5px;top:-0.33px;color:#25252d;">ММВП-2100055400</span></div>
<div class="cell" style="left:731px;top:347px;width:33px;height:11px;"><span class="ct" style="left:0.5px;top:-0.33px;color:#25252d;">10440</span></div>
<div class="cell" style="left:850px;top:347px;width:40px;height:11px;"><span class="ct" style="right:0;transform-origin:100% 0;top:-0.33px;color:#25252d;">1</span></div>
<div class="cell" style="left:893px;top:347px;width:74px;height:11px;"><span class="ct" style="left:0.5px;top:-0.33px;color:#25252d;">15.10.1980</span></div>
<div class="cell" style="left:969px;top:347px;width:41px;height:11px;"><span class="ct" style="right:0;transform-origin:100% 0;top:-0.33px;color:#25252d;">2850</span></div>
<div style="left:1px;top:359px;width:7px;height:12px;background:#f2f2f4;"></div>
<div style="left:9px;top:359px;width:14px;height:12px;background:#f4f2fc;"></div>
<div style="left:1px;top:371px;width:1011px;height:1px;background:#e4e5e9;"></div>
<div style="left:8px;top:359px;width:1px;height:12px;background:#e1e2e6;"></div>
<div style="left:23px;top:359px;width:1px;height:12px;background:#e1e2e6;"></div>
<div style="left:66px;top:359px;width:1px;height:12px;background:#e1e2e6;"></div>
<div style="left:148px;top:359px;width:1px;height:12px;background:#e1e2e6;"></div>
<div style="left:224px;top:359px;width:1px;height:12px;background:#e1e2e6;"></div>
<div style="left:267px;top:359px;width:1px;height:12px;background:#e1e2e6;"></div>
<div style="left:355px;top:359px;width:1px;height:12px;background:#e1e2e6;"></div>
<div style="left:395px;top:359px;width:1px;height:12px;background:#e1e2e6;"></div>
<div style="left:475px;top:359px;width:1px;height:12px;background:#e1e2e6;"></div>
<div style="left:514px;top:359px;width:1px;height:12px;background:#e1e2e6;"></div>
<div style="left:565px;top:359px;width:1px;height:12px;background:#e1e2e6;"></div>
<div style="left:625px;top:359px;width:1px;height:12px;background:#e1e2e6;"></div>
<div style="left:730px;top:359px;width:1px;height:12px;background:#e1e2e6;"></div>
<div style="left:765px;top:359px;width:1px;height:12px;background:#e1e2e6;"></div>
<div style="left:849px;top:359px;width:1px;height:12px;background:#e1e2e6;"></div>
<div style="left:892px;top:359px;width:1px;height:12px;background:#e1e2e6;"></div>
<div style="left:968px;top:359px;width:1px;height:12px;background:#e1e2e6;"></div>
<div style="left:1012px;top:359px;width:1px;height:12px;background:#e1e2e6;"></div>
<div class="cell" style="left:24px;top:359px;width:41px;height:12px;"><span class="ct" style="left:0.5px;top:-0.12px;color:#25252d;">02.11.2021</span></div>
<div class="cell" style="left:67px;top:359px;width:80px;height:12px;"><span class="ct" style="left:0.5px;top:-0.12px;color:#25252d;">Петрова Наталья Алекс</span></div>
<div class="cell" style="left:149px;top:359px;width:74px;height:12px;"><span class="ct" style="left:0.5px;top:-0.12px;color:#25252d;">Хрусталева Наталья</span></div>
<div class="cell" style="left:268px;top:359px;width:86px;height:12px;"><span class="ct" style="left:0.5px;top:-0.12px;color:#25252d;">ООО СК &quot;Альянс Жизнь&quot;</span></div>
<div class="cell" style="left:356px;top:359px;width:38px;height:12px;"><span class="ct" style="left:0.5px;top:-0.12px;color:#25252d;">Н-2 Д2-1717</span></div>
<div class="cell" style="left:476px;top:359px;width:36px;height:12px;"><span class="ct" style="right:0;transform-origin:100% 0;top:-0.12px;color:#25252d;">1 170,00</span></div>
<div class="cell" style="left:566px;top:359px;width:58px;height:12px;"><span class="ct" style="left:0.5px;top:-0.12px;color:#25252d;">ММВП-2100055400</span></div>
<div class="cell" style="left:850px;top:359px;width:40px;height:12px;"><span class="ct" style="right:0;transform-origin:100% 0;top:-0.12px;color:#25252d;">1</span></div>
<div class="cell" style="left:893px;top:359px;width:74px;height:12px;"><span class="ct" style="left:0.5px;top:-0.12px;color:#25252d;">27.05.1999</span></div>
<div class="cell" style="left:969px;top:359px;width:41px;height:12px;"><span class="ct" style="right:0;transform-origin:100% 0;top:-0.12px;color:#25252d;">1300</span></div>
<div style="left:1px;top:372px;width:7px;height:11px;background:#f2f2f4;"></div>
<div style="left:9px;top:372px;width:14px;height:11px;background:#eef1f7;"></div>
<div style="left:1px;top:383px;width:1011px;height:1px;background:#e4e5e9;"></div>
<div style="left:8px;top:372px;width:1px;height:11px;background:#e1e2e6;"></div>
<div style="left:23px;top:372px;width:1px;height:11px;background:#e1e2e6;"></div>
<div style="left:66px;top:372px;width:1px;height:11px;background:#e1e2e6;"></div>
<div style="left:148px;top:372px;width:1px;height:11px;background:#e1e2e6;"></div>
<div style="left:224px;top:372px;width:1px;height:11px;background:#e1e2e6;"></div>
<div style="left:267px;top:372px;width:1px;height:11px;background:#e1e2e6;"></div>
<div style="left:355px;top:372px;width:1px;height:11px;background:#e1e2e6;"></div>
<div style="left:395px;top:372px;width:1px;height:11px;background:#e1e2e6;"></div>
<div style="left:475px;top:372px;width:1px;height:11px;background:#e1e2e6;"></div>
<div style="left:514px;top:372px;width:1px;height:11px;background:#e1e2e6;"></div>
<div style="left:565px;top:372px;width:1px;height:11px;background:#e1e2e6;"></div>
<div style="left:625px;top:372px;width:1px;height:11px;background:#e1e2e6;"></div>
<div style="left:730px;top:372px;width:1px;height:11px;background:#e1e2e6;"></div>
<div style="left:765px;top:372px;width:1px;height:11px;background:#e1e2e6;"></div>
<div style="left:849px;top:372px;width:1px;height:11px;background:#e1e2e6;"></div>
<div style="left:892px;top:372px;width:1px;height:11px;background:#e1e2e6;"></div>
<div style="left:968px;top:372px;width:1px;height:11px;background:#e1e2e6;"></div>
<div style="left:1012px;top:372px;width:1px;height:11px;background:#e1e2e6;"></div>
<div class="cell" style="left:24px;top:372px;width:41px;height:11px;"><span class="ct" style="left:0.5px;top:-0.91px;color:#25252d;">02.11.2021</span></div>
<div class="cell" style="left:67px;top:372px;width:80px;height:11px;"><span class="ct" style="left:0.5px;top:-0.91px;color:#25252d;">Тулепова Галия Султан</span></div>
<div class="cell" style="left:149px;top:372px;width:74px;height:11px;"><span class="ct" style="left:0.5px;top:-0.91px;color:#25252d;">Макаров Роман Никол</span></div>
<div class="cell" style="left:268px;top:372px;width:86px;height:11px;"><span class="ct" style="left:0.5px;top:-0.91px;color:#25252d;">ООО СК &quot;Альянс Жизнь&quot;</span></div>
<div class="cell" style="left:356px;top:372px;width:38px;height:11px;"><span class="ct" style="left:0.5px;top:-0.91px;color:#25252d;">Н-2 Д2-1717</span></div>
<div class="cell" style="left:476px;top:372px;width:36px;height:11px;"><span class="ct" style="right:0;transform-origin:100% 0;top:-0.91px;color:#25252d;">1 170,00</span></div>
<div class="cell" style="left:566px;top:372px;width:58px;height:11px;"><span class="ct" style="left:0.5px;top:-0.91px;color:#25252d;">ММВП-2100055400</span></div>
<div class="cell" style="left:850px;top:372px;width:40px;height:11px;"><span class="ct" style="right:0;transform-origin:100% 0;top:-0.91px;color:#25252d;">20</span></div>
<div class="cell" style="left:893px;top:372px;width:74px;height:11px;"><span class="ct" style="left:0.5px;top:-0.91px;color:#25252d;">12.11.1959</span></div>
<div class="cell" style="left:969px;top:372px;width:41px;height:11px;"><span class="ct" style="right:0;transform-origin:100% 0;top:-0.91px;color:#25252d;">1300</span></div>
<div style="left:1px;top:384px;width:7px;height:11px;background:#f2f2f4;"></div>
<div style="left:9px;top:384px;width:14px;height:11px;background:#f4f2fc;"></div>
<div style="left:1px;top:395px;width:1011px;height:1px;background:#e4e5e9;"></div>
<div style="left:8px;top:384px;width:1px;height:11px;background:#e1e2e6;"></div>
<div style="left:23px;top:384px;width:1px;height:11px;background:#e1e2e6;"></div>
<div style="left:66px;top:384px;width:1px;height:11px;background:#e1e2e6;"></div>
<div style="left:148px;top:384px;width:1px;height:11px;background:#e1e2e6;"></div>
<div style="left:224px;top:384px;width:1px;height:11px;background:#e1e2e6;"></div>
<div style="left:267px;top:384px;width:1px;height:11px;background:#e1e2e6;"></div>
<div style="left:355px;top:384px;width:1px;height:11px;background:#e1e2e6;"></div>
<div style="left:395px;top:384px;width:1px;height:11px;background:#e1e2e6;"></div>
<div style="left:475px;top:384px;width:1px;height:11px;background:#e1e2e6;"></div>
<div style="left:514px;top:384px;width:1px;height:11px;background:#e1e2e6;"></div>
<div style="left:565px;top:384px;width:1px;height:11px;background:#e1e2e6;"></div>
<div style="left:625px;top:384px;width:1px;height:11px;background:#e1e2e6;"></div>
<div style="left:730px;top:384px;width:1px;height:11px;background:#e1e2e6;"></div>
<div style="left:765px;top:384px;width:1px;height:11px;background:#e1e2e6;"></div>
<div style="left:849px;top:384px;width:1px;height:11px;background:#e1e2e6;"></div>
<div style="left:892px;top:384px;width:1px;height:11px;background:#e1e2e6;"></div>
<div style="left:968px;top:384px;width:1px;height:11px;background:#e1e2e6;"></div>
<div style="left:1012px;top:384px;width:1px;height:11px;background:#e1e2e6;"></div>
<div class="cell" style="left:24px;top:384px;width:41px;height:11px;"><span class="ct" style="left:0.5px;top:-0.70px;color:#25252d;">02.11.2021</span></div>
<div class="cell" style="left:67px;top:384px;width:80px;height:11px;"><span class="ct" style="left:0.5px;top:-0.70px;color:#25252d;">Кузнецов Александр Се</span></div>
<div class="cell" style="left:149px;top:384px;width:74px;height:11px;"><span class="ct" style="left:0.5px;top:-0.70px;color:#25252d;">Гарегинян А.С.</span></div>
<div class="cell" style="left:268px;top:384px;width:86px;height:11px;"><span class="ct" style="left:0.5px;top:-0.70px;color:#25252d;">ООО &quot;Росгосстрах&quot;</span></div>
<div class="cell" style="left:356px;top:384px;width:38px;height:11px;"><span class="ct" style="left:0.5px;top:-0.70px;color:#25252d;">Н-2 М-50-НС</span></div>
<div class="cell" style="left:396px;top:384px;width:78px;height:11px;"><span class="ct" style="left:0.5px;top:-0.70px;color:#25252d;">Амбулаторно-поликлини</span></div>
<div class="cell" style="left:476px;top:384px;width:36px;height:11px;"><span class="ct" style="right:0;transform-origin:100% 0;top:-0.70px;color:#25252d;">5 400,00</span></div>
<div class="cell" style="left:566px;top:384px;width:58px;height:11px;"><span class="ct" style="left:0.5px;top:-0.70px;color:#25252d;">77-МЮ-3861-20/МС</span></div>
<div class="cell" style="left:731px;top:384px;width:33px;height:11px;"><span class="ct" style="left:0.5px;top:-0.70px;color:#25252d;">19458</span></div>
<div class="cell" style="left:850px;top:384px;width:40px;height:11px;"><span class="ct" style="right:0;transform-origin:100% 0;top:-0.70px;color:#25252d;">20</span></div>
<div class="cell" style="left:893px;top:384px;width:74px;height:11px;"><span class="ct" style="left:0.5px;top:-0.70px;color:#25252d;">05.11.1977</span></div>
<div class="cell" style="left:969px;top:384px;width:41px;height:11px;"><span class="ct" style="right:0;transform-origin:100% 0;top:-0.70px;color:#25252d;">5400</span></div>
<div style="left:1px;top:396px;width:7px;height:11px;background:#f2f2f4;"></div>
<div style="left:9px;top:396px;width:14px;height:11px;background:#eef1f7;"></div>
<div style="left:1px;top:407px;width:1011px;height:1px;background:#e4e5e9;"></div>
<div style="left:8px;top:396px;width:1px;height:11px;background:#e1e2e6;"></div>
<div style="left:23px;top:396px;width:1px;height:11px;background:#e1e2e6;"></div>
<div style="left:66px;top:396px;width:1px;height:11px;background:#e1e2e6;"></div>
<div style="left:148px;top:396px;width:1px;height:11px;background:#e1e2e6;"></div>
<div style="left:224px;top:396px;width:1px;height:11px;background:#e1e2e6;"></div>
<div style="left:267px;top:396px;width:1px;height:11px;background:#e1e2e6;"></div>
<div style="left:355px;top:396px;width:1px;height:11px;background:#e1e2e6;"></div>
<div style="left:395px;top:396px;width:1px;height:11px;background:#e1e2e6;"></div>
<div style="left:475px;top:396px;width:1px;height:11px;background:#e1e2e6;"></div>
<div style="left:514px;top:396px;width:1px;height:11px;background:#e1e2e6;"></div>
<div style="left:565px;top:396px;width:1px;height:11px;background:#e1e2e6;"></div>
<div style="left:625px;top:396px;width:1px;height:11px;background:#e1e2e6;"></div>
<div style="left:730px;top:396px;width:1px;height:11px;background:#e1e2e6;"></div>
<div style="left:765px;top:396px;width:1px;height:11px;background:#e1e2e6;"></div>
<div style="left:849px;top:396px;width:1px;height:11px;background:#e1e2e6;"></div>
<div style="left:892px;top:396px;width:1px;height:11px;background:#e1e2e6;"></div>
<div style="left:968px;top:396px;width:1px;height:11px;background:#e1e2e6;"></div>
<div style="left:1012px;top:396px;width:1px;height:11px;background:#e1e2e6;"></div>
<div class="cell" style="left:24px;top:396px;width:41px;height:11px;"><span class="ct" style="left:0.5px;top:-0.49px;color:#25252d;">02.11.2021</span></div>
<div class="cell" style="left:67px;top:396px;width:80px;height:11px;"><span class="ct" style="left:0.5px;top:-0.49px;color:#25252d;">Кузнецов Александр Се</span></div>
<div class="cell" style="left:149px;top:396px;width:74px;height:11px;"><span class="ct" style="left:0.5px;top:-0.49px;color:#25252d;">Стабина Ю.Ю.</span></div>
<div class="cell" style="left:225px;top:396px;width:40px;height:11px;"><span class="ct" style="right:0;transform-origin:100% 0;top:-0.49px;color:#25252d;">200000179</span></div>
<div class="cell" style="left:268px;top:396px;width:86px;height:11px;"><span class="ct" style="left:0.5px;top:-0.49px;color:#25252d;">ООО &quot;Росгосстрах&quot;</span></div>
<div class="cell" style="left:356px;top:396px;width:38px;height:11px;"><span class="ct" style="left:0.5px;top:-0.49px;color:#25252d;">Н-2 М-50-НС</span></div>
<div class="cell" style="left:396px;top:396px;width:78px;height:11px;"><span class="ct" style="left:0.5px;top:-0.49px;color:#25252d;">Амбулаторно-поликлини</span></div>
<div class="cell" style="left:476px;top:396px;width:36px;height:11px;"><span class="ct" style="right:0;transform-origin:100% 0;top:-0.49px;color:#25252d;">700,00</span></div>
<div class="cell" style="left:566px;top:396px;width:58px;height:11px;"><span class="ct" style="left:0.5px;top:-0.49px;color:#25252d;">77-МЮ-3861-20/МС</span></div>
<div class="cell" style="left:731px;top:396px;width:33px;height:11px;"><span class="ct" style="left:0.5px;top:-0.49px;color:#25252d;">19458</span></div>
<div class="cell" style="left:850px;top:396px;width:40px;height:11px;"><span class="ct" style="right:0;transform-origin:100% 0;top:-0.49px;color:#25252d;">20</span></div>
<div class="cell" style="left:893px;top:396px;width:74px;height:11px;"><span class="ct" style="left:0.5px;top:-0.49px;color:#25252d;">05.11.1977</span></div>
<div class="cell" style="left:969px;top:396px;width:41px;height:11px;"><span class="ct" style="right:0;transform-origin:100% 0;top:-0.49px;color:#25252d;">700</span></div>
<svg style="position:absolute;left:12px;top:397px" width="7" height="8" viewBox="0 0 7 8"><rect x="0.5" y="0.5" width="6" height="7" fill="#f4ec60" stroke="#3c3c30" stroke-width="1"/><path d="M1.8 4 H5.2 M3.5 2.3 V5.7" stroke="#202020" stroke-width="1"/></svg>
<div style="left:1px;top:408px;width:7px;height:11px;background:#f2f2f4;"></div>
<div style="left:9px;top:408px;width:14px;height:11px;background:#f4f2fc;"></div>
<div style="left:1px;top:419px;width:1011px;height:1px;background:#e4e5e9;"></div>
<div style="left:8px;top:408px;width:1px;height:11px;background:#e1e2e6;"></div>
<div style="left:23px;top:408px;width:1px;height:11px;background:#e1e2e6;"></div>
<div style="left:66px;top:408px;width:1px;height:11px;background:#e1e2e6;"></div>
<div style="left:148px;top:408px;width:1px;height:11px;background:#e1e2e6;"></div>
<div style="left:224px;top:408px;width:1px;height:11px;background:#e1e2e6;"></div>
<div style="left:267px;top:408px;width:1px;height:11px;background:#e1e2e6;"></div>
<div style="left:355px;top:408px;width:1px;height:11px;background:#e1e2e6;"></div>
<div style="left:395px;top:408px;width:1px;height:11px;background:#e1e2e6;"></div>
<div style="left:475px;top:408px;width:1px;height:11px;background:#e1e2e6;"></div>
<div style="left:514px;top:408px;width:1px;height:11px;background:#e1e2e6;"></div>
<div style="left:565px;top:408px;width:1px;height:11px;background:#e1e2e6;"></div>
<div style="left:625px;top:408px;width:1px;height:11px;background:#e1e2e6;"></div>
<div style="left:730px;top:408px;width:1px;height:11px;background:#e1e2e6;"></div>
<div style="left:765px;top:408px;width:1px;height:11px;background:#e1e2e6;"></div>
<div style="left:849px;top:408px;width:1px;height:11px;background:#e1e2e6;"></div>
<div style="left:892px;top:408px;width:1px;height:11px;background:#e1e2e6;"></div>
<div style="left:968px;top:408px;width:1px;height:11px;background:#e1e2e6;"></div>
<div style="left:1012px;top:408px;width:1px;height:11px;background:#e1e2e6;"></div>
<div class="cell" style="left:24px;top:408px;width:41px;height:11px;"><span class="ct" style="left:0.5px;top:-0.28px;color:#25252d;">02.11.2021</span></div>
<div class="cell" style="left:67px;top:408px;width:80px;height:11px;"><span class="ct" style="left:0.5px;top:-0.28px;color:#25252d;">Кузнецов Александр Се</span></div>
<div class="cell" style="left:149px;top:408px;width:74px;height:11px;"><span class="ct" style="left:0.5px;top:-0.28px;color:#25252d;">Радина Анна Анатоль</span></div>
<div class="cell" style="left:268px;top:408px;width:86px;height:11px;"><span class="ct" style="left:0.5px;top:-0.28px;color:#25252d;">ООО &quot;Росгосстрах&quot;</span></div>
<div class="cell" style="left:356px;top:408px;width:38px;height:11px;"><span class="ct" style="left:0.5px;top:-0.28px;color:#25252d;">Н-2 М-50-НС</span></div>
<div class="cell" style="left:396px;top:408px;width:78px;height:11px;"><span class="ct" style="left:0.5px;top:-0.28px;color:#25252d;">Амбулаторно-поликлини</span></div>
<div class="cell" style="left:476px;top:408px;width:36px;height:11px;"><span class="ct" style="right:0;transform-origin:100% 0;top:-0.28px;color:#25252d;">1 600,00</span></div>
<div class="cell" style="left:566px;top:408px;width:58px;height:11px;"><span class="ct" style="left:0.5px;top:-0.28px;color:#25252d;">77-МЮ-3861-20/МС</span></div>
<div class="cell" style="left:731px;top:408px;width:33px;height:11px;"><span class="ct" style="left:0.5px;top:-0.28px;color:#25252d;">19458</span></div>
<div class="cell" style="left:850px;top:408px;width:40px;height:11px;"><span class="ct" style="right:0;transform-origin:100% 0;top:-0.28px;color:#25252d;">20</span></div>
<div class="cell" style="left:893px;top:408px;width:74px;height:11px;"><span class="ct" style="left:0.5px;top:-0.28px;color:#25252d;">05.11.1977</span></div>
<div class="cell" style="left:969px;top:408px;width:41px;height:11px;"><span class="ct" style="right:0;transform-origin:100% 0;top:-0.28px;color:#25252d;">1600</span></div>
<div style="left:1px;top:420px;width:7px;height:12px;background:#f2f2f4;"></div>
<div style="left:9px;top:420px;width:14px;height:12px;background:#eef1f7;"></div>
<div style="left:1px;top:432px;width:1011px;height:1px;background:#e4e5e9;"></div>
<div style="left:8px;top:420px;width:1px;height:12px;background:#e1e2e6;"></div>
<div style="left:23px;top:420px;width:1px;height:12px;background:#e1e2e6;"></div>
<div style="left:66px;top:420px;width:1px;height:12px;background:#e1e2e6;"></div>
<div style="left:148px;top:420px;width:1px;height:12px;background:#e1e2e6;"></div>
<div style="left:224px;top:420px;width:1px;height:12px;background:#e1e2e6;"></div>
<div style="left:267px;top:420px;width:1px;height:12px;background:#e1e2e6;"></div>
<div style="left:355px;top:420px;width:1px;height:12px;background:#e1e2e6;"></div>
<div style="left:395px;top:420px;width:1px;height:12px;background:#e1e2e6;"></div>
<div style="left:475px;top:420px;width:1px;height:12px;background:#e1e2e6;"></div>
<div style="left:514px;top:420px;width:1px;height:12px;background:#e1e2e6;"></div>
<div style="left:565px;top:420px;width:1px;height:12px;background:#e1e2e6;"></div>
<div style="left:625px;top:420px;width:1px;height:12px;background:#e1e2e6;"></div>
<div style="left:730px;top:420px;width:1px;height:12px;background:#e1e2e6;"></div>
<div style="left:765px;top:420px;width:1px;height:12px;background:#e1e2e6;"></div>
<div style="left:849px;top:420px;width:1px;height:12px;background:#e1e2e6;"></div>
<div style="left:892px;top:420px;width:1px;height:12px;background:#e1e2e6;"></div>
<div style="left:968px;top:420px;width:1px;height:12px;background:#e1e2e6;"></div>
<div style="left:1012px;top:420px;width:1px;height:12px;background:#e1e2e6;"></div>
<div class="cell" style="left:24px;top:420px;width:41px;height:12px;"><span class="ct" style="left:0.5px;top:-0.07px;color:#25252d;">02.11.2021</span></div>
<div class="cell" style="left:67px;top:420px;width:80px;height:12px;"><span class="ct" style="left:0.5px;top:-0.07px;color:#25252d;">Маховых Нина Владими</span></div>
<div class="cell" style="left:149px;top:420px;width:74px;height:12px;"><span class="ct" style="left:0.5px;top:-0.07px;color:#25252d;">Ионичевская И.И.</span></div>
<div class="cell" style="left:268px;top:420px;width:86px;height:12px;"><span class="ct" style="left:0.5px;top:-0.07px;color:#25252d;">СПАО &quot;Ингосстрах&quot;</span></div>
<div class="cell" style="left:356px;top:420px;width:38px;height:12px;"><span class="ct" style="left:0.5px;top:-0.07px;color:#25252d;">Н-2 №36597</span></div>
<div class="cell" style="left:476px;top:420px;width:36px;height:12px;"><span class="ct" style="right:0;transform-origin:100% 0;top:-0.07px;color:#25252d;">1 600,00</span></div>
<div class="cell" style="left:566px;top:420px;width:58px;height:12px;"><span class="ct" style="left:0.5px;top:-0.07px;color:#25252d;">Пр5673434</span></div>
<div class="cell" style="left:626px;top:420px;width:103px;height:12px;"><span class="ct" style="left:0.5px;top:-0.07px;color:#25252d;">Автономная некоммерческая</span></div>
<div class="cell" style="left:850px;top:420px;width:40px;height:12px;"><span class="ct" style="right:0;transform-origin:100% 0;top:-0.07px;color:#25252d;">20</span></div>
<div class="cell" style="left:893px;top:420px;width:74px;height:12px;"><span class="ct" style="left:0.5px;top:-0.07px;color:#25252d;">30.05.1970</span></div>
<div class="cell" style="left:969px;top:420px;width:41px;height:12px;"><span class="ct" style="right:0;transform-origin:100% 0;top:-0.07px;color:#25252d;">1600</span></div>
<div style="left:1px;top:433px;width:7px;height:11px;background:#f2f2f4;"></div>
<div style="left:9px;top:433px;width:14px;height:11px;background:#f4f2fc;"></div>
<div style="left:1px;top:444px;width:1011px;height:1px;background:#e4e5e9;"></div>
<div style="left:8px;top:433px;width:1px;height:11px;background:#e1e2e6;"></div>
<div style="left:23px;top:433px;width:1px;height:11px;background:#e1e2e6;"></div>
<div style="left:66px;top:433px;width:1px;height:11px;background:#e1e2e6;"></div>
<div style="left:148px;top:433px;width:1px;height:11px;background:#e1e2e6;"></div>
<div style="left:224px;top:433px;width:1px;height:11px;background:#e1e2e6;"></div>
<div style="left:267px;top:433px;width:1px;height:11px;background:#e1e2e6;"></div>
<div style="left:355px;top:433px;width:1px;height:11px;background:#e1e2e6;"></div>
<div style="left:395px;top:433px;width:1px;height:11px;background:#e1e2e6;"></div>
<div style="left:475px;top:433px;width:1px;height:11px;background:#e1e2e6;"></div>
<div style="left:514px;top:433px;width:1px;height:11px;background:#e1e2e6;"></div>
<div style="left:565px;top:433px;width:1px;height:11px;background:#e1e2e6;"></div>
<div style="left:625px;top:433px;width:1px;height:11px;background:#e1e2e6;"></div>
<div style="left:730px;top:433px;width:1px;height:11px;background:#e1e2e6;"></div>
<div style="left:765px;top:433px;width:1px;height:11px;background:#e1e2e6;"></div>
<div style="left:849px;top:433px;width:1px;height:11px;background:#e1e2e6;"></div>
<div style="left:892px;top:433px;width:1px;height:11px;background:#e1e2e6;"></div>
<div style="left:968px;top:433px;width:1px;height:11px;background:#e1e2e6;"></div>
<div style="left:1012px;top:433px;width:1px;height:11px;background:#e1e2e6;"></div>
<div class="cell" style="left:24px;top:433px;width:41px;height:11px;"><span class="ct" style="left:0.5px;top:-0.86px;color:#25252d;">02.11.2021</span></div>
<div class="cell" style="left:67px;top:433px;width:80px;height:11px;"><span class="ct" style="left:0.5px;top:-0.86px;color:#25252d;">Горелова Ольга Иванов</span></div>
<div class="cell" style="left:149px;top:433px;width:74px;height:11px;"><span class="ct" style="left:0.5px;top:-0.86px;color:#25252d;">Гарегинян А.С.</span></div>
<div class="cell" style="left:268px;top:433px;width:86px;height:11px;"><span class="ct" style="left:0.5px;top:-0.86px;color:#25252d;">АО &quot;СОГАЗ&quot;</span></div>
<div class="cell" style="left:356px;top:433px;width:38px;height:11px;"><span class="ct" style="left:0.5px;top:-0.86px;color:#25252d;">Н-2 № 18 00</span></div>
<div class="cell" style="left:476px;top:433px;width:36px;height:11px;"><span class="ct" style="right:0;transform-origin:100% 0;top:-0.86px;color:#25252d;">1 440,00</span></div>
<div class="cell" style="left:566px;top:433px;width:58px;height:11px;"><span class="ct" style="left:0.5px;top:-0.86px;color:#25252d;">19LM2958/1/0001</span></div>
<div class="cell" style="left:850px;top:433px;width:40px;height:11px;"><span class="ct" style="right:0;transform-origin:100% 0;top:-0.86px;color:#25252d;">20</span></div>
<div class="cell" style="left:893px;top:433px;width:74px;height:11px;"><span class="ct" style="left:0.5px;top:-0.86px;color:#25252d;">12.10.1979</span></div>
<div class="cell" style="left:969px;top:433px;width:41px;height:11px;"><span class="ct" style="right:0;transform-origin:100% 0;top:-0.86px;color:#25252d;">1600</span></div>
<div style="left:1px;top:445px;width:7px;height:11px;background:#f2f2f4;"></div>
<div style="left:9px;top:445px;width:14px;height:11px;background:#eef1f7;"></div>
<div style="left:1px;top:456px;width:1011px;height:1px;background:#e4e5e9;"></div>
<div style="left:8px;top:445px;width:1px;height:11px;background:#e1e2e6;"></div>
<div style="left:23px;top:445px;width:1px;height:11px;background:#e1e2e6;"></div>
<div style="left:66px;top:445px;width:1px;height:11px;background:#e1e2e6;"></div>
<div style="left:148px;top:445px;width:1px;height:11px;background:#e1e2e6;"></div>
<div style="left:224px;top:445px;width:1px;height:11px;background:#e1e2e6;"></div>
<div style="left:267px;top:445px;width:1px;height:11px;background:#e1e2e6;"></div>
<div style="left:355px;top:445px;width:1px;height:11px;background:#e1e2e6;"></div>
<div style="left:395px;top:445px;width:1px;height:11px;background:#e1e2e6;"></div>
<div style="left:475px;top:445px;width:1px;height:11px;background:#e1e2e6;"></div>
<div style="left:514px;top:445px;width:1px;height:11px;background:#e1e2e6;"></div>
<div style="left:565px;top:445px;width:1px;height:11px;background:#e1e2e6;"></div>
<div style="left:625px;top:445px;width:1px;height:11px;background:#e1e2e6;"></div>
<div style="left:730px;top:445px;width:1px;height:11px;background:#e1e2e6;"></div>
<div style="left:765px;top:445px;width:1px;height:11px;background:#e1e2e6;"></div>
<div style="left:849px;top:445px;width:1px;height:11px;background:#e1e2e6;"></div>
<div style="left:892px;top:445px;width:1px;height:11px;background:#e1e2e6;"></div>
<div style="left:968px;top:445px;width:1px;height:11px;background:#e1e2e6;"></div>
<div style="left:1012px;top:445px;width:1px;height:11px;background:#e1e2e6;"></div>
<div class="cell" style="left:24px;top:445px;width:41px;height:11px;"><span class="ct" style="left:0.5px;top:-0.65px;color:#25252d;">02.11.2021</span></div>
<div class="cell" style="left:67px;top:445px;width:80px;height:11px;"><span class="ct" style="left:0.5px;top:-0.65px;color:#25252d;">Смирнов Дмитрий Алекс</span></div>
<div class="cell" style="left:149px;top:445px;width:74px;height:11px;"><span class="ct" style="left:0.5px;top:-0.65px;color:#25252d;">Хрусталева Наталья</span></div>
<div class="cell" style="left:268px;top:445px;width:86px;height:11px;"><span class="ct" style="left:0.5px;top:-0.65px;color:#25252d;">САО &quot;РЕСО-Гарантия&quot;</span></div>
<div class="cell" style="left:356px;top:445px;width:38px;height:11px;"><span class="ct" style="left:0.5px;top:-0.65px;color:#25252d;">Н-2 16/37</span></div>
<div class="cell" style="left:476px;top:445px;width:36px;height:11px;"><span class="ct" style="right:0;transform-origin:100% 0;top:-0.65px;color:#25252d;">1 105,00</span></div>
<div class="cell" style="left:566px;top:445px;width:58px;height:11px;"><span class="ct" style="left:0.5px;top:-0.65px;color:#25252d;">1274122-796/21-0</span></div>
<div class="cell" style="left:626px;top:445px;width:103px;height:11px;"><span class="ct" style="left:0.5px;top:-0.65px;color:#25252d;">ООО «МЕРСЕДЕС-БЕНЦ МАНУФ</span></div>
<div class="cell" style="left:731px;top:445px;width:33px;height:11px;"><span class="ct" style="left:0.5px;top:-0.65px;color:#25252d;">16513</span></div>
<div class="cell" style="left:850px;top:445px;width:40px;height:11px;"><span class="ct" style="right:0;transform-origin:100% 0;top:-0.65px;color:#25252d;">1</span></div>
<div class="cell" style="left:893px;top:445px;width:74px;height:11px;"><span class="ct" style="left:0.5px;top:-0.65px;color:#25252d;">10.11.1996</span></div>
<div class="cell" style="left:969px;top:445px;width:41px;height:11px;"><span class="ct" style="right:0;transform-origin:100% 0;top:-0.65px;color:#25252d;">1300</span></div>
<div style="left:1px;top:457px;width:7px;height:11px;background:#f2f2f4;"></div>
<div style="left:9px;top:457px;width:14px;height:11px;background:#f4f2fc;"></div>
<div style="left:1px;top:468px;width:1011px;height:1px;background:#e4e5e9;"></div>
<div style="left:8px;top:457px;width:1px;height:11px;background:#e1e2e6;"></div>
<div style="left:23px;top:457px;width:1px;height:11px;background:#e1e2e6;"></div>
<div style="left:66px;top:457px;width:1px;height:11px;background:#e1e2e6;"></div>
<div style="left:148px;top:457px;width:1px;height:11px;background:#e1e2e6;"></div>
<div style="left:224px;top:457px;width:1px;height:11px;background:#e1e2e6;"></div>
<div style="left:267px;top:457px;width:1px;height:11px;background:#e1e2e6;"></div>
<div style="left:355px;top:457px;width:1px;height:11px;background:#e1e2e6;"></div>
<div style="left:395px;top:457px;width:1px;height:11px;background:#e1e2e6;"></div>
<div style="left:475px;top:457px;width:1px;height:11px;background:#e1e2e6;"></div>
<div style="left:514px;top:457px;width:1px;height:11px;background:#e1e2e6;"></div>
<div style="left:565px;top:457px;width:1px;height:11px;background:#e1e2e6;"></div>
<div style="left:625px;top:457px;width:1px;height:11px;background:#e1e2e6;"></div>
<div style="left:730px;top:457px;width:1px;height:11px;background:#e1e2e6;"></div>
<div style="left:765px;top:457px;width:1px;height:11px;background:#e1e2e6;"></div>
<div style="left:849px;top:457px;width:1px;height:11px;background:#e1e2e6;"></div>
<div style="left:892px;top:457px;width:1px;height:11px;background:#e1e2e6;"></div>
<div style="left:968px;top:457px;width:1px;height:11px;background:#e1e2e6;"></div>
<div style="left:1012px;top:457px;width:1px;height:11px;background:#e1e2e6;"></div>
<div class="cell" style="left:24px;top:457px;width:41px;height:11px;"><span class="ct" style="left:0.5px;top:-0.44px;color:#25252d;">02.11.2021</span></div>
<div class="cell" style="left:67px;top:457px;width:80px;height:11px;"><span class="ct" style="left:0.5px;top:-0.44px;color:#25252d;">Кирейшина Любовь Тара</span></div>
<div class="cell" style="left:149px;top:457px;width:74px;height:11px;"><span class="ct" style="left:0.5px;top:-0.44px;color:#25252d;">Хрусталева Наталья</span></div>
<div class="cell" style="left:268px;top:457px;width:86px;height:11px;"><span class="ct" style="left:0.5px;top:-0.44px;color:#25252d;">ООО &quot;Бестдоктор&quot;</span></div>
<div class="cell" style="left:356px;top:457px;width:38px;height:11px;"><span class="ct" style="left:0.5px;top:-0.44px;color:#25252d;">Н-2 654-77</span></div>
<div class="cell" style="left:476px;top:457px;width:36px;height:11px;"><span class="ct" style="right:0;transform-origin:100% 0;top:-0.44px;color:#25252d;">1 170,00</span></div>
<div class="cell" style="left:566px;top:457px;width:58px;height:11px;"><span class="ct" style="left:0.5px;top:-0.44px;color:#25252d;">12807</span></div>
<div class="cell" style="left:626px;top:457px;width:103px;height:11px;"><span class="ct" style="left:0.5px;top:-0.44px;color:#25252d;">ООО «Интернет Решения»</span></div>
<div class="cell" style="left:731px;top:457px;width:33px;height:11px;"><span class="ct" style="left:0.5px;top:-0.44px;color:#25252d;">13060</span></div>
<div class="cell" style="left:850px;top:457px;width:40px;height:11px;"><span class="ct" style="right:0;transform-origin:100% 0;top:-0.44px;color:#25252d;">1</span></div>
<div class="cell" style="left:893px;top:457px;width:74px;height:11px;"><span class="ct" style="left:0.5px;top:-0.44px;color:#25252d;">18.01.1981</span></div>
<div class="cell" style="left:969px;top:457px;width:41px;height:11px;"><span class="ct" style="right:0;transform-origin:100% 0;top:-0.44px;color:#25252d;">1300</span></div>
<div style="left:1px;top:469px;width:7px;height:11px;background:#f2f2f4;"></div>
<div style="left:9px;top:469px;width:14px;height:11px;background:#eef1f7;"></div>
<div style="left:1px;top:480px;width:1011px;height:1px;background:#e4e5e9;"></div>
<div style="left:8px;top:469px;width:1px;height:11px;background:#e1e2e6;"></div>
<div style="left:23px;top:469px;width:1px;height:11px;background:#e1e2e6;"></div>
<div style="left:66px;top:469px;width:1px;height:11px;background:#e1e2e6;"></div>
<div style="left:148px;top:469px;width:1px;height:11px;background:#e1e2e6;"></div>
<div style="left:224px;top:469px;width:1px;height:11px;background:#e1e2e6;"></div>
<div style="left:267px;top:469px;width:1px;height:11px;background:#e1e2e6;"></div>
<div style="left:355px;top:469px;width:1px;height:11px;background:#e1e2e6;"></div>
<div style="left:395px;top:469px;width:1px;height:11px;background:#e1e2e6;"></div>
<div style="left:475px;top:469px;width:1px;height:11px;background:#e1e2e6;"></div>
<div style="left:514px;top:469px;width:1px;height:11px;background:#e1e2e6;"></div>
<div style="left:565px;top:469px;width:1px;height:11px;background:#e1e2e6;"></div>
<div style="left:625px;top:469px;width:1px;height:11px;background:#e1e2e6;"></div>
<div style="left:730px;top:469px;width:1px;height:11px;background:#e1e2e6;"></div>
<div style="left:765px;top:469px;width:1px;height:11px;background:#e1e2e6;"></div>
<div style="left:849px;top:469px;width:1px;height:11px;background:#e1e2e6;"></div>
<div style="left:892px;top:469px;width:1px;height:11px;background:#e1e2e6;"></div>
<div style="left:968px;top:469px;width:1px;height:11px;background:#e1e2e6;"></div>
<div style="left:1012px;top:469px;width:1px;height:11px;background:#e1e2e6;"></div>
<div class="cell" style="left:24px;top:469px;width:41px;height:11px;"><span class="ct" style="left:0.5px;top:-0.23px;color:#25252d;">02.11.2021</span></div>
<div class="cell" style="left:67px;top:469px;width:80px;height:11px;"><span class="ct" style="left:0.5px;top:-0.23px;color:#25252d;">Захарова Мария Сергее</span></div>
<div class="cell" style="left:149px;top:469px;width:74px;height:11px;"><span class="ct" style="left:0.5px;top:-0.23px;color:#25252d;">Хрусталева Наталья</span></div>
<div class="cell" style="left:268px;top:469px;width:86px;height:11px;"><span class="ct" style="left:0.5px;top:-0.23px;color:#25252d;">ООО &quot;Бестдоктор&quot;</span></div>
<div class="cell" style="left:356px;top:469px;width:38px;height:11px;"><span class="ct" style="left:0.5px;top:-0.23px;color:#25252d;">Н-2 654-77</span></div>
<div class="cell" style="left:476px;top:469px;width:36px;height:11px;"><span class="ct" style="right:0;transform-origin:100% 0;top:-0.23px;color:#25252d;">2 565,00</span></div>
<div class="cell" style="left:566px;top:469px;width:58px;height:11px;"><span class="ct" style="left:0.5px;top:-0.23px;color:#25252d;">19593</span></div>
<div class="cell" style="left:626px;top:469px;width:103px;height:11px;"><span class="ct" style="left:0.5px;top:-0.23px;color:#25252d;">ООО «Интернет Решения»</span></div>
<div class="cell" style="left:731px;top:469px;width:33px;height:11px;"><span class="ct" style="left:0.5px;top:-0.23px;color:#25252d;">12967</span></div>
<div class="cell" style="left:850px;top:469px;width:40px;height:11px;"><span class="ct" style="right:0;transform-origin:100% 0;top:-0.23px;color:#25252d;">1</span></div>
<div class="cell" style="left:893px;top:469px;width:74px;height:11px;"><span class="ct" style="left:0.5px;top:-0.23px;color:#25252d;">25.06.1985</span></div>
<div class="cell" style="left:969px;top:469px;width:41px;height:11px;"><span class="ct" style="right:0;transform-origin:100% 0;top:-0.23px;color:#25252d;">2850</span></div>
<div style="left:1px;top:481px;width:7px;height:12px;background:#f2f2f4;"></div>
<div style="left:9px;top:481px;width:14px;height:12px;background:#f4f2fc;"></div>
<div style="left:1px;top:493px;width:1011px;height:1px;background:#e4e5e9;"></div>
<div style="left:8px;top:481px;width:1px;height:12px;background:#e1e2e6;"></div>
<div style="left:23px;top:481px;width:1px;height:12px;background:#e1e2e6;"></div>
<div style="left:66px;top:481px;width:1px;height:12px;background:#e1e2e6;"></div>
<div style="left:148px;top:481px;width:1px;height:12px;background:#e1e2e6;"></div>
<div style="left:224px;top:481px;width:1px;height:12px;background:#e1e2e6;"></div>
<div style="left:267px;top:481px;width:1px;height:12px;background:#e1e2e6;"></div>
<div style="left:355px;top:481px;width:1px;height:12px;background:#e1e2e6;"></div>
<div style="left:395px;top:481px;width:1px;height:12px;background:#e1e2e6;"></div>
<div style="left:475px;top:481px;width:1px;height:12px;background:#e1e2e6;"></div>
<div style="left:514px;top:481px;width:1px;height:12px;background:#e1e2e6;"></div>
<div style="left:565px;top:481px;width:1px;height:12px;background:#e1e2e6;"></div>
<div style="left:625px;top:481px;width:1px;height:12px;background:#e1e2e6;"></div>
<div style="left:730px;top:481px;width:1px;height:12px;background:#e1e2e6;"></div>
<div style="left:765px;top:481px;width:1px;height:12px;background:#e1e2e6;"></div>
<div style="left:849px;top:481px;width:1px;height:12px;background:#e1e2e6;"></div>
<div style="left:892px;top:481px;width:1px;height:12px;background:#e1e2e6;"></div>
<div style="left:968px;top:481px;width:1px;height:12px;background:#e1e2e6;"></div>
<div style="left:1012px;top:481px;width:1px;height:12px;background:#e1e2e6;"></div>
<div class="cell" style="left:24px;top:481px;width:41px;height:12px;"><span class="ct" style="left:0.5px;top:-0.02px;color:#25252d;">02.11.2021</span></div>
<div class="cell" style="left:67px;top:481px;width:80px;height:12px;"><span class="ct" style="left:0.5px;top:-0.02px;color:#25252d;">Ермаков Роман Констант</span></div>
<div class="cell" style="left:149px;top:481px;width:74px;height:12px;"><span class="ct" style="left:0.5px;top:-0.02px;color:#25252d;">Макаров Роман Никол</span></div>
<div class="cell" style="left:268px;top:481px;width:86px;height:12px;"><span class="ct" style="left:0.5px;top:-0.02px;color:#25252d;">ООО &quot;Бестдоктор&quot;</span></div>
<div class="cell" style="left:356px;top:481px;width:38px;height:12px;"><span class="ct" style="left:0.5px;top:-0.02px;color:#25252d;">Н-2 654-77</span></div>
<div class="cell" style="left:476px;top:481px;width:36px;height:12px;"><span class="ct" style="right:0;transform-origin:100% 0;top:-0.02px;color:#25252d;">2 070,00</span></div>
<div class="cell" style="left:566px;top:481px;width:58px;height:12px;"><span class="ct" style="left:0.5px;top:-0.02px;color:#25252d;">67375</span></div>
<div class="cell" style="left:626px;top:481px;width:103px;height:12px;"><span class="ct" style="left:0.5px;top:-0.02px;color:#25252d;">ООО «Интернет Решения»</span></div>
<div class="cell" style="left:850px;top:481px;width:40px;height:12px;"><span class="ct" style="right:0;transform-origin:100% 0;top:-0.02px;color:#25252d;">1</span></div>
<div class="cell" style="left:893px;top:481px;width:74px;height:12px;"><span class="ct" style="left:0.5px;top:-0.02px;color:#25252d;">30.11.1992</span></div>
<div class="cell" style="left:969px;top:481px;width:41px;height:12px;"><span class="ct" style="right:0;transform-origin:100% 0;top:-0.02px;color:#25252d;">2300</span></div>
<div style="left:1px;top:494px;width:7px;height:11px;background:#f2f2f4;"></div>
<div style="left:9px;top:494px;width:14px;height:11px;background:#eef1f7;"></div>
<div style="left:1px;top:505px;width:1011px;height:1px;background:#e4e5e9;"></div>
<div style="left:8px;top:494px;width:1px;height:11px;background:#e1e2e6;"></div>
<div style="left:23px;top:494px;width:1px;height:11px;background:#e1e2e6;"></div>
<div style="left:66px;top:494px;width:1px;height:11px;background:#e1e2e6;"></div>
<div style="left:148px;top:494px;width:1px;height:11px;background:#e1e2e6;"></div>
<div style="left:224px;top:494px;width:1px;height:11px;background:#e1e2e6;"></div>
<div style="left:267px;top:494px;width:1px;height:11px;background:#e1e2e6;"></div>
<div style="left:355px;top:494px;width:1px;height:11px;background:#e1e2e6;"></div>
<div style="left:395px;top:494px;width:1px;height:11px;background:#e1e2e6;"></div>
<div style="left:475px;top:494px;width:1px;height:11px;background:#e1e2e6;"></div>
<div style="left:514px;top:494px;width:1px;height:11px;background:#e1e2e6;"></div>
<div style="left:565px;top:494px;width:1px;height:11px;background:#e1e2e6;"></div>
<div style="left:625px;top:494px;width:1px;height:11px;background:#e1e2e6;"></div>
<div style="left:730px;top:494px;width:1px;height:11px;background:#e1e2e6;"></div>
<div style="left:765px;top:494px;width:1px;height:11px;background:#e1e2e6;"></div>
<div style="left:849px;top:494px;width:1px;height:11px;background:#e1e2e6;"></div>
<div style="left:892px;top:494px;width:1px;height:11px;background:#e1e2e6;"></div>
<div style="left:968px;top:494px;width:1px;height:11px;background:#e1e2e6;"></div>
<div style="left:1012px;top:494px;width:1px;height:11px;background:#e1e2e6;"></div>
<div class="cell" style="left:24px;top:494px;width:41px;height:11px;"><span class="ct" style="left:0.5px;top:-0.81px;color:#25252d;">02.11.2021</span></div>
<div class="cell" style="left:67px;top:494px;width:80px;height:11px;"><span class="ct" style="left:0.5px;top:-0.81px;color:#25252d;">Сонина Ольга Евгеньевн</span></div>
<div class="cell" style="left:149px;top:494px;width:74px;height:11px;"><span class="ct" style="left:0.5px;top:-0.81px;color:#25252d;">Стабина Ю.Ю.</span></div>
<div class="cell" style="left:225px;top:494px;width:40px;height:11px;"><span class="ct" style="right:0;transform-origin:100% 0;top:-0.81px;color:#25252d;">200000184</span></div>
<div class="cell" style="left:268px;top:494px;width:86px;height:11px;"><span class="ct" style="left:0.5px;top:-0.81px;color:#25252d;">ООО&quot;БестДоктор</span></div>
<div class="cell" style="left:356px;top:494px;width:38px;height:11px;"><span class="ct" style="left:0.5px;top:-0.81px;color:#25252d;">Н-М 660-77</span></div>
<div class="cell" style="left:396px;top:494px;width:78px;height:11px;"><span class="ct" style="left:0.5px;top:-0.81px;color:#25252d;">АПП</span></div>
<div class="cell" style="left:476px;top:494px;width:36px;height:11px;"><span class="ct" style="right:0;transform-origin:100% 0;top:-0.81px;color:#25252d;">1 269,00</span></div>
<div class="cell" style="left:566px;top:494px;width:58px;height:11px;"><span class="ct" style="left:0.5px;top:-0.81px;color:#25252d;">22887</span></div>
<div class="cell" style="left:626px;top:494px;width:103px;height:11px;"><span class="ct" style="left:0.5px;top:-0.81px;color:#25252d;">ООО «Интернет Решения»</span></div>
<div class="cell" style="left:850px;top:494px;width:40px;height:11px;"><span class="ct" style="right:0;transform-origin:100% 0;top:-0.81px;color:#25252d;">20</span></div>
<div class="cell" style="left:893px;top:494px;width:74px;height:11px;"><span class="ct" style="left:0.5px;top:-0.81px;color:#25252d;">10.12.1971</span></div>
<div class="cell" style="left:969px;top:494px;width:41px;height:11px;"><span class="ct" style="right:0;transform-origin:100% 0;top:-0.81px;color:#25252d;">1410</span></div>
<svg style="position:absolute;left:12px;top:495px" width="7" height="8" viewBox="0 0 7 8"><rect x="0.5" y="0.5" width="6" height="7" fill="#f4ec60" stroke="#3c3c30" stroke-width="1"/><path d="M1.8 4 H5.2 M3.5 2.3 V5.7" stroke="#202020" stroke-width="1"/></svg>
<div style="left:1px;top:506px;width:7px;height:11px;background:#f2f2f4;"></div>
<div style="left:9px;top:506px;width:14px;height:11px;background:#f4f2fc;"></div>
<div style="left:1px;top:517px;width:1011px;height:1px;background:#e4e5e9;"></div>
<div style="left:8px;top:506px;width:1px;height:11px;background:#e1e2e6;"></div>
<div style="left:23px;top:506px;width:1px;height:11px;background:#e1e2e6;"></div>
<div style="left:66px;top:506px;width:1px;height:11px;background:#e1e2e6;"></div>
<div style="left:148px;top:506px;width:1px;height:11px;background:#e1e2e6;"></div>
<div style="left:224px;top:506px;width:1px;height:11px;background:#e1e2e6;"></div>
<div style="left:267px;top:506px;width:1px;height:11px;background:#e1e2e6;"></div>
<div style="left:355px;top:506px;width:1px;height:11px;background:#e1e2e6;"></div>
<div style="left:395px;top:506px;width:1px;height:11px;background:#e1e2e6;"></div>
<div style="left:475px;top:506px;width:1px;height:11px;background:#e1e2e6;"></div>
<div style="left:514px;top:506px;width:1px;height:11px;background:#e1e2e6;"></div>
<div style="left:565px;top:506px;width:1px;height:11px;background:#e1e2e6;"></div>
<div style="left:625px;top:506px;width:1px;height:11px;background:#e1e2e6;"></div>
<div style="left:730px;top:506px;width:1px;height:11px;background:#e1e2e6;"></div>
<div style="left:765px;top:506px;width:1px;height:11px;background:#e1e2e6;"></div>
<div style="left:849px;top:506px;width:1px;height:11px;background:#e1e2e6;"></div>
<div style="left:892px;top:506px;width:1px;height:11px;background:#e1e2e6;"></div>
<div style="left:968px;top:506px;width:1px;height:11px;background:#e1e2e6;"></div>
<div style="left:1012px;top:506px;width:1px;height:11px;background:#e1e2e6;"></div>
<div class="cell" style="left:24px;top:506px;width:41px;height:11px;"><span class="ct" style="left:0.5px;top:-0.60px;color:#25252d;">02.11.2021</span></div>
<div class="cell" style="left:67px;top:506px;width:80px;height:11px;"><span class="ct" style="left:0.5px;top:-0.60px;color:#25252d;">Матасова Олеся Юрьевн</span></div>
<div class="cell" style="left:149px;top:506px;width:74px;height:11px;"><span class="ct" style="left:0.5px;top:-0.60px;color:#25252d;">Логвина В.О.</span></div>
<div class="cell" style="left:268px;top:506px;width:86px;height:11px;"><span class="ct" style="left:0.5px;top:-0.60px;color:#25252d;">ООО СК&quot;Альянс Жизнь&quot;</span></div>
<div class="cell" style="left:356px;top:506px;width:38px;height:11px;"><span class="ct" style="left:0.5px;top:-0.60px;color:#25252d;">Н-М Л-1316</span></div>
<div class="cell" style="left:476px;top:506px;width:36px;height:11px;"><span class="ct" style="right:0;transform-origin:100% 0;top:-0.60px;color:#25252d;">1 530,00</span></div>
<div class="cell" style="left:566px;top:506px;width:58px;height:11px;"><span class="ct" style="left:0.5px;top:-0.60px;color:#25252d;">ММВП-2100055400</span></div>
<div class="cell" style="left:850px;top:506px;width:40px;height:11px;"><span class="ct" style="right:0;transform-origin:100% 0;top:-0.60px;color:#25252d;">20</span></div>
<div class="cell" style="left:893px;top:506px;width:74px;height:11px;"><span class="ct" style="left:0.5px;top:-0.60px;color:#25252d;">10.04.1985</span></div>
<div class="cell" style="left:969px;top:506px;width:41px;height:11px;"><span class="ct" style="right:0;transform-origin:100% 0;top:-0.60px;color:#25252d;">1700</span></div>
<svg style="position:absolute;left:2px;top:325px" width="5" height="7" viewBox="0 0 5 7"><path d="M1 0.5 L4.5 3.5 L1 6.5 Z" fill="#25252f"/></svg>
<div style="left:9px;top:322px;width:15px;height:12px;border:1px dashed #7a7a7a;box-sizing:border-box;background:#f0f4fa;"></div>
<div style="left:24px;top:322px;width:988px;height:1px;background:repeating-linear-gradient(90deg,#d89a50 0 1px,transparent 1px 2px);opacity:0.5;"></div>
<div style="left:24px;top:333px;width:988px;height:1px;background:repeating-linear-gradient(90deg,#d89a50 0 1px,transparent 1px 2px);opacity:0.5;"></div>
</body></html>
